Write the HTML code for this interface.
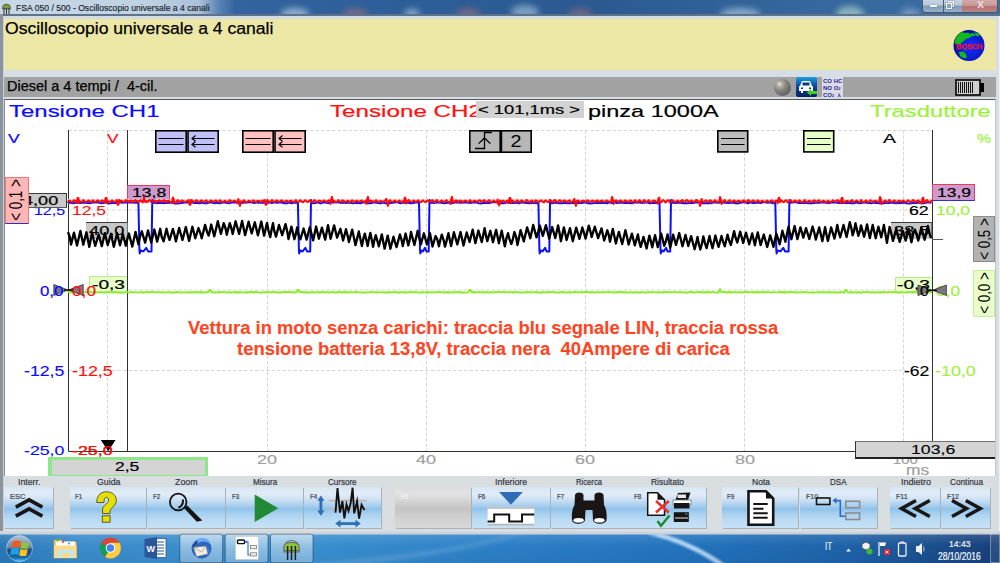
<!DOCTYPE html><html><head><meta charset="utf-8"><style>html,body{margin:0;padding:0;width:1000px;height:563px;overflow:hidden;background:#d6dde3;position:relative}div{box-sizing:border-box}</style></head><body>
<div style="position:absolute;left:0;top:0;width:1000px;height:15px;background:linear-gradient(90deg,#c9d8e6 0px,#bed0e2 150px,#a9c0d8 200px,#5a86b6 218px,#3464a0 235px,#2d5e98 400px,#2a5a90 600px,#35679c 800px,#3b6ea2 1000px)"></div>
<div style="position:absolute;left:281px;top:8px;width:28px;height:12px;border-radius:50%;background:rgba(220,235,250,.55);filter:blur(3px)"></div>
<div style="position:absolute;left:343px;top:8px;width:24px;height:12px;border-radius:50%;background:rgba(200,120,120,.45);filter:blur(3px)"></div>
<div style="position:absolute;left:404px;top:9px;width:16px;height:10px;border-radius:50%;background:rgba(220,235,250,.5);filter:blur(3px)"></div>
<div style="position:absolute;left:456px;top:8px;width:24px;height:12px;border-radius:50%;background:rgba(200,120,120,.45);filter:blur(3px)"></div>
<div style="position:absolute;left:511px;top:5px;width:28px;height:14px;border-radius:50%;background:rgba(220,235,250,.45);filter:blur(3px)"></div>
<div style="position:absolute;left:568px;top:8px;width:24px;height:12px;border-radius:50%;background:rgba(200,120,120,.4);filter:blur(3px)"></div>
<div style="position:absolute;left:720px;top:8px;width:40px;height:12px;border-radius:50%;background:rgba(220,235,250,.5);filter:blur(3px)"></div>
<div style="position:absolute;left:836px;top:6px;width:28px;height:16px;border-radius:50%;background:rgba(200,235,215,.55);filter:blur(3px)"></div>
<div style="position:absolute;left:900px;top:8px;width:20px;height:12px;border-radius:50%;background:rgba(170,190,230,.5);filter:blur(3px)"></div>
<svg style="position:absolute;left:1px;top:2px" width="11" height="12" viewBox="0 0 11 12"><path d="M1.5 6 A4 4 0 0 1 9.5 6 L9.5 7 L1.5 7Z" fill="#7a9a4a" stroke="#4a5a3a" stroke-width="0.8"/><path d="M3 6v6M5.5 6v6M8 6v6" stroke="#3a3a3a" stroke-width="1.1"/></svg>
<svg style="position:absolute;left:13.90px;top:0.96px;overflow:visible;" width="197.70" height="13.39"><text x="2" y="10.04" font-family="Liberation Sans" font-weight="normal" font-size="9.57" fill="#141c28" stroke="#141c28" stroke-width="0.15" textLength="193.70" lengthAdjust="spacingAndGlyphs" xml:space="preserve">FSA 050 / 500 - Oscilloscopio universale a 4 canali</text></svg>
<div style="position:absolute;left:922px;top:-1px;width:76px;height:14px;border:1px solid #4a5a6a;border-top:none;border-radius:0 0 4px 4px;overflow:hidden;background:linear-gradient(180deg,#c7d5e3 0,#b8c9da 45%,#7f9ab6 55%,#9ab1c8 100%)">
<div style="position:absolute;left:20px;top:0;width:1px;height:14px;background:#4a5a6a"></div>
<div style="position:absolute;left:39px;top:0;width:37px;height:14px;background:linear-gradient(180deg,#d4aaaa 0,#c89a9a 45%,#b47272 55%,#c08888 100%)"></div>
<div style="position:absolute;left:7px;top:6px;width:7px;height:2px;background:#f4f6f8;box-shadow:0 0 1px #334"></div>
<div style="position:absolute;left:25px;top:2px;width:6px;height:6px;border:1.2px solid #f0f2f4;box-shadow:0 0 1px #334"></div>
<div style="position:absolute;left:23px;top:4px;width:6px;height:6px;border:1.2px solid #f0f2f4;background:#8ca3ba;box-shadow:0 0 1px #334"></div>
<div style="position:absolute;left:39px;top:-2px;width:37px;text-align:center;font:bold 12px 'Liberation Sans';color:#eddada;line-height:14px">x</div>
</div>
<div style="position:absolute;left:0px;top:14px;width:1000px;height:2px;box-sizing:border-box;background:#5f7388"></div>
<div style="position:absolute;left:0px;top:16px;width:1000px;height:3px;box-sizing:border-box;background:#d3dce4"></div>
<div style="position:absolute;left:0px;top:14px;width:3px;height:519px;box-sizing:border-box;background:#8b949c"></div>
<div style="position:absolute;left:3px;top:16px;width:1px;height:517px;box-sizing:border-box;background:#c9d1d8"></div>
<div style="position:absolute;left:996px;top:16px;width:4px;height:517px;box-sizing:border-box;background:#d6dde3"></div>
<div style="position:absolute;left:999px;top:16px;width:1px;height:517px;box-sizing:border-box;background:#eef2f5"></div>
<div style="position:absolute;left:4px;top:19px;width:992px;height:51px;box-sizing:border-box;background:#ede7a6"></div>
<svg style="position:absolute;left:2.80px;top:17.16px;overflow:visible;" width="272.40" height="22.72"><text x="2" y="17.04" font-family="Liberation Sans" font-weight="normal" font-size="16.23" fill="#000" stroke="#000" stroke-width="0.25" textLength="268.40" lengthAdjust="spacingAndGlyphs" xml:space="preserve">Oscilloscopio universale a 4 canali</text></svg>
<svg style="position:absolute;left:953px;top:29px" width="32" height="33" viewBox="0 0 32 33">
<defs><radialGradient id="gl" cx="0.55" cy="0.55" r="0.6"><stop offset="0" stop-color="#1a30ff"/><stop offset="0.75" stop-color="#0818c8"/><stop offset="1" stop-color="#00085a"/></radialGradient></defs>
<circle cx="16" cy="16.5" r="15.5" fill="url(#gl)"/>
<path d="M1.5 14 C2 9 5 5 9 3 L12 4 L15 3.5 L17 5 L20 4 L23 5.5 L21 7 L18 7.5 L16 9 L13 10 L11 12 L9 13 L8 15 L4 16 Z" fill="#12b81e"/>
<path d="M22 3 L27 5.5 L25.5 7.5 L22.5 6.5 Z" fill="#12b81e"/>
<path d="M6 23 L10 22.5 L13 25 L14 28.5 L11 29.5 L7 27 Z" fill="#12b81e"/>
<path d="M11 20 L13 20.5 L12.5 22 Z" fill="#12b81e"/>
<text x="16.2" y="20.3" text-anchor="middle" font-family="Liberation Sans" font-weight="bold" font-size="8" fill="#e8142e" stroke="#e8142e" stroke-width="0.3" textLength="26" lengthAdjust="spacingAndGlyphs">BOSCH</text>
</svg>
<div style="position:absolute;left:4px;top:77px;width:992px;height:20px;box-sizing:border-box;background:#a2a2a2"></div>
<svg style="position:absolute;left:4.80px;top:74.72px;overflow:visible;" width="154.50" height="21.71"><text x="2" y="16.28" font-family="Liberation Sans" font-weight="normal" font-size="15.51" fill="#000" stroke="#000" stroke-width="0.25" textLength="150.50" lengthAdjust="spacingAndGlyphs" xml:space="preserve">Diesel a 4 tempi /  4-cil.</text></svg>
<div style="position:absolute;left:774px;top:79px;width:17px;height:17px;border-radius:50%;background:radial-gradient(circle at 33% 30%,#f2f0e2 0,#b4b2a6 14%,#86847e 40%,#5e5e62 78%,#4a4472 100%)"></div>
<svg style="position:absolute;left:796px;top:77px" width="21" height="20" viewBox="0 0 21 20">
<defs><linearGradient id="cg" x1="0" y1="0" x2="0" y2="1"><stop offset="0" stop-color="#1aa0e0"/><stop offset="0.45" stop-color="#0a4a9a"/><stop offset="1" stop-color="#061e60"/></linearGradient></defs>
<rect x="0" y="0" width="21" height="20" rx="2" fill="url(#cg)"/>
<path d="M4 9 L6 4 L14 4 L16 9 L17 9.5 L17 14 L15 14 L15 16 L13 16 L13 14 L7 14 L7 16 L5 16 L5 14 L3 14 L3 9.5Z" fill="#fff"/>
<rect x="6.5" y="5.5" width="7" height="3" fill="#0a3a8a"/>
<rect x="5" y="10.5" width="2" height="1.5" fill="#0a3a8a"/><rect x="13" y="10.5" width="2" height="1.5" fill="#0a3a8a"/>
<path d="M11 15.5 L15 12 L15 14 L21 14 L21 17 L15 17 L15 19Z" fill="#40d020"/>
</svg>
<div style="position:absolute;left:822px;top:77px;width:21px;height:20px;background:#dcdce6;font:bold 6px 'Liberation Sans';line-height:6.5px;color:#2a2a9a;padding:1px 0 0 1px;white-space:pre">CO HC<br>NO O<span style="font-size:4px">2</span><br>CO<span style="font-size:4px">2</span>  λ</div>
<svg style="position:absolute;left:955px;top:79px" width="31" height="17" viewBox="0 0 31 17">
<rect x="1" y="1" width="24" height="15" fill="#cfcfcf" stroke="#000" stroke-width="1.6"/>
<rect x="25" y="4" width="4" height="9" fill="#000"/>
<g stroke="#111" stroke-width="1"><path d="M3.5 3v11M5.5 3v11M7.5 3v11M9.5 3v11M11.5 3v11M13.5 3v11M15.5 3v11M17.5 3v11"/></g>
</svg>
<div style="position:absolute;left:4px;top:99px;width:992px;height:377.3px;box-sizing:border-box;background:#fff;border-top:1.6px solid #5a5a5a;border-left:1px solid #8a8a8a;border-right:1px solid #bfc6cc"></div>
<svg style="position:absolute;left:0;top:0" width="1000" height="563" viewBox="0 0 1000 563">
<line x1="107.5" y1="130" x2="107.5" y2="451" stroke="#d6d6d6" stroke-width="1" stroke-dasharray="3.5 2"/>
<line x1="267.5" y1="130" x2="267.5" y2="451" stroke="#d6d6d6" stroke-width="1" stroke-dasharray="3.5 2"/>
<line x1="426.5" y1="130" x2="426.5" y2="451" stroke="#d6d6d6" stroke-width="1" stroke-dasharray="3.5 2"/>
<line x1="585.5" y1="130" x2="585.5" y2="451" stroke="#d6d6d6" stroke-width="1" stroke-dasharray="3.5 2"/>
<line x1="744.5" y1="130" x2="744.5" y2="451" stroke="#d6d6d6" stroke-width="1" stroke-dasharray="3.5 2"/>
<line x1="903.5" y1="130" x2="903.5" y2="451" stroke="#d6d6d6" stroke-width="1" stroke-dasharray="3.5 2"/>
<line x1="68" y1="130.5" x2="932" y2="130.5" stroke="#d6d6d6" stroke-width="1" stroke-dasharray="3.5 2"/>
<line x1="68" y1="210" x2="932" y2="210" stroke="#d6d6d6" stroke-width="1" stroke-dasharray="3.5 2"/>
<line x1="68" y1="290" x2="932" y2="290" stroke="#d6d6d6" stroke-width="1" stroke-dasharray="3.5 2"/>
<line x1="68" y1="370.5" x2="932" y2="370.5" stroke="#d6d6d6" stroke-width="1" stroke-dasharray="3.5 2"/>
<path d="M68.5 130 V451.5 H932.5 V130" fill="none" stroke="#303030" stroke-width="1"/>
<line x1="127.5" y1="130" x2="127.5" y2="451.5" stroke="#303030" stroke-width="1"/>
</svg>
<svg style="position:absolute;left:7.00px;top:98.64px;overflow:visible;" width="154.50" height="24.35"><text x="2" y="18.26" font-family="Liberation Sans" font-weight="normal" font-size="17.39" fill="#0a0aff" stroke="#0a0aff" stroke-width="0.2" textLength="150.50" lengthAdjust="spacingAndGlyphs" xml:space="preserve">Tensione CH1</text></svg>
<svg style="position:absolute;left:328.00px;top:98.64px;overflow:visible;" width="156.00" height="24.35"><text x="2" y="18.26" font-family="Liberation Sans" font-weight="normal" font-size="17.39" fill="#ff1010" stroke="#ff1010" stroke-width="0.2" textLength="152.00" lengthAdjust="spacingAndGlyphs" xml:space="preserve">Tensione CH2</text></svg>
<svg style="position:absolute;left:586.30px;top:98.64px;overflow:visible;" width="134.70" height="24.35"><text x="2" y="18.26" font-family="Liberation Sans" font-weight="normal" font-size="17.39" fill="#000" stroke="#000" stroke-width="0.2" textLength="130.70" lengthAdjust="spacingAndGlyphs" xml:space="preserve">pinza 1000A</text></svg>
<svg style="position:absolute;left:867.60px;top:98.64px;overflow:visible;" width="124.80" height="24.35"><text x="2" y="18.26" font-family="Liberation Sans" font-weight="normal" font-size="17.39" fill="#9cf23c" stroke="#9cf23c" stroke-width="0.2" textLength="120.80" lengthAdjust="spacingAndGlyphs" xml:space="preserve">Trasduttore</text></svg>
<svg style="position:absolute;left:6.30px;top:128.65px;overflow:visible;" width="15.70" height="18.87"><text x="2" y="14.15" font-family="Liberation Sans" font-weight="normal" font-size="13.48" fill="#0a0aff" stroke="#0a0aff" stroke-width="0.2" textLength="11.70" lengthAdjust="spacingAndGlyphs" xml:space="preserve">V</text></svg>
<svg style="position:absolute;left:105.00px;top:128.65px;overflow:visible;" width="15.40" height="18.87"><text x="2" y="14.15" font-family="Liberation Sans" font-weight="normal" font-size="13.48" fill="#ff1010" stroke="#ff1010" stroke-width="0.2" textLength="11.40" lengthAdjust="spacingAndGlyphs" xml:space="preserve">V</text></svg>
<svg style="position:absolute;left:881.00px;top:128.65px;overflow:visible;" width="17.00" height="18.87"><text x="2" y="14.15" font-family="Liberation Sans" font-weight="normal" font-size="13.48" fill="#000" stroke="#000" stroke-width="0.2" textLength="13.00" lengthAdjust="spacingAndGlyphs" xml:space="preserve">A</text></svg>
<svg style="position:absolute;left:975.00px;top:128.65px;overflow:visible;" width="18.00" height="18.87"><text x="2" y="14.15" font-family="Liberation Sans" font-weight="normal" font-size="13.48" fill="#9cf23c" stroke="#9cf23c" stroke-width="0.2" textLength="14.00" lengthAdjust="spacingAndGlyphs" xml:space="preserve">%</text></svg>
<svg style="position:absolute;left:31.50px;top:200.95px;overflow:visible;" width="35.00" height="18.46"><text x="2" y="13.85" font-family="Liberation Sans" font-weight="normal" font-size="13.19" fill="#0a0aff" stroke="#0a0aff" stroke-width="0.12" textLength="31.00" lengthAdjust="spacingAndGlyphs" xml:space="preserve">12,5</text></svg>
<svg style="position:absolute;left:69.50px;top:200.95px;overflow:visible;" width="38.00" height="18.46"><text x="2" y="13.85" font-family="Liberation Sans" font-weight="normal" font-size="13.19" fill="#ff1010" stroke="#ff1010" stroke-width="0.12" textLength="34.00" lengthAdjust="spacingAndGlyphs" xml:space="preserve">12,5</text></svg>
<svg style="position:absolute;left:22.10px;top:360.89px;overflow:visible;" width="44.40" height="19.88"><text x="2" y="14.91" font-family="Liberation Sans" font-weight="normal" font-size="14.20" fill="#0a0aff" stroke="#0a0aff" stroke-width="0.12" textLength="40.40" lengthAdjust="spacingAndGlyphs" xml:space="preserve">-12,5</text></svg>
<svg style="position:absolute;left:69.50px;top:360.89px;overflow:visible;" width="44.80" height="19.88"><text x="2" y="14.91" font-family="Liberation Sans" font-weight="normal" font-size="14.20" fill="#ff1010" stroke="#ff1010" stroke-width="0.12" textLength="40.80" lengthAdjust="spacingAndGlyphs" xml:space="preserve">-12,5</text></svg>
<svg style="position:absolute;left:22.10px;top:441.00px;overflow:visible;" width="44.40" height="18.67"><text x="2" y="14.00" font-family="Liberation Sans" font-weight="normal" font-size="13.33" fill="#0a0aff" stroke="#0a0aff" stroke-width="0.12" textLength="40.40" lengthAdjust="spacingAndGlyphs" xml:space="preserve">-25,0</text></svg>
<svg style="position:absolute;left:69.50px;top:441.00px;overflow:visible;" width="44.60" height="18.67"><text x="2" y="14.00" font-family="Liberation Sans" font-weight="normal" font-size="13.33" fill="#ff1010" stroke="#ff1010" stroke-width="0.12" textLength="40.60" lengthAdjust="spacingAndGlyphs" xml:space="preserve">-25,0</text></svg>
<svg style="position:absolute;left:906.80px;top:201.10px;overflow:visible;" width="23.70" height="18.26"><text x="2" y="13.70" font-family="Liberation Sans" font-weight="normal" font-size="13.04" fill="#000" stroke="#000" stroke-width="0.2" textLength="19.70" lengthAdjust="spacingAndGlyphs" xml:space="preserve">62</text></svg>
<svg style="position:absolute;left:934.40px;top:201.10px;overflow:visible;" width="38.10" height="18.26"><text x="2" y="13.70" font-family="Liberation Sans" font-weight="normal" font-size="13.04" fill="#9cf23c" stroke="#9cf23c" stroke-width="0.2" textLength="34.10" lengthAdjust="spacingAndGlyphs" xml:space="preserve">10,0</text></svg>
<svg style="position:absolute;left:901.80px;top:360.89px;overflow:visible;" width="29.40" height="19.88"><text x="2" y="14.91" font-family="Liberation Sans" font-weight="normal" font-size="14.20" fill="#000" stroke="#000" stroke-width="0.12" textLength="25.40" lengthAdjust="spacingAndGlyphs" xml:space="preserve">-62</text></svg>
<svg style="position:absolute;left:933.20px;top:360.89px;overflow:visible;" width="44.80" height="19.88"><text x="2" y="14.91" font-family="Liberation Sans" font-weight="normal" font-size="14.20" fill="#9cf23c" stroke="#9cf23c" stroke-width="0.12" textLength="40.80" lengthAdjust="spacingAndGlyphs" xml:space="preserve">-10,0</text></svg>
<svg style="position:absolute;left:934.00px;top:280.79px;overflow:visible;" width="28.00" height="19.48"><text x="2" y="14.61" font-family="Liberation Sans" font-weight="normal" font-size="13.91" fill="#9cf23c" stroke="#9cf23c" stroke-width="0.2" textLength="24.00" lengthAdjust="spacingAndGlyphs" xml:space="preserve">0,0</text></svg>
<svg style="position:absolute;left:255.30px;top:449.70px;overflow:visible;" width="24.00" height="19.07"><text x="2" y="14.30" font-family="Liberation Sans" font-weight="normal" font-size="13.62" fill="#a0a0a0" stroke="#a0a0a0" stroke-width="0.2" textLength="20.00" lengthAdjust="spacingAndGlyphs" xml:space="preserve">20</text></svg>
<svg style="position:absolute;left:414.00px;top:449.70px;overflow:visible;" width="24.00" height="19.07"><text x="2" y="14.30" font-family="Liberation Sans" font-weight="normal" font-size="13.62" fill="#a0a0a0" stroke="#a0a0a0" stroke-width="0.2" textLength="20.00" lengthAdjust="spacingAndGlyphs" xml:space="preserve">40</text></svg>
<svg style="position:absolute;left:573.00px;top:449.70px;overflow:visible;" width="24.00" height="19.07"><text x="2" y="14.30" font-family="Liberation Sans" font-weight="normal" font-size="13.62" fill="#a0a0a0" stroke="#a0a0a0" stroke-width="0.2" textLength="20.00" lengthAdjust="spacingAndGlyphs" xml:space="preserve">60</text></svg>
<svg style="position:absolute;left:732.50px;top:449.70px;overflow:visible;" width="24.00" height="19.07"><text x="2" y="14.30" font-family="Liberation Sans" font-weight="normal" font-size="13.62" fill="#a0a0a0" stroke="#a0a0a0" stroke-width="0.2" textLength="20.00" lengthAdjust="spacingAndGlyphs" xml:space="preserve">80</text></svg>
<svg style="position:absolute;left:890.70px;top:449.70px;overflow:visible;" width="28.80" height="19.07"><text x="2" y="14.30" font-family="Liberation Sans" font-weight="normal" font-size="13.62" fill="#a0a0a0" stroke="#a0a0a0" stroke-width="0.2" textLength="24.80" lengthAdjust="spacingAndGlyphs" xml:space="preserve">100</text></svg>
<svg style="position:absolute;left:903.50px;top:459.59px;overflow:visible;" width="27.20" height="19.48"><text x="2" y="14.61" font-family="Liberation Sans" font-weight="normal" font-size="13.91" fill="#a0a0a0" stroke="#a0a0a0" stroke-width="0.2" textLength="23.20" lengthAdjust="spacingAndGlyphs" xml:space="preserve">ms</text></svg>
<div style="position:absolute;left:475.5px;top:101.3px;width:108.89999999999998px;height:16.900000000000006px;box-sizing:border-box;background:#d2d2d2"></div>
<svg style="position:absolute;left:476.00px;top:100.45px;overflow:visible;" width="106.00" height="18.46"><text x="2" y="13.85" font-family="Liberation Sans" font-weight="normal" font-size="13.19" fill="#000" stroke="#000" stroke-width="0.2" textLength="102.00" lengthAdjust="spacingAndGlyphs" xml:space="preserve">&lt; 101,1ms &gt;</text></svg>
<svg style="position:absolute;left:154.6px;top:130px" width="64" height="23" viewBox="0 0 64 23">
<rect x="0.8" y="0.8" width="30.4" height="21.4" fill="#c0c0f6" stroke="#000" stroke-width="1.6"/>
<rect x="33" y="0.8" width="30.2" height="21.4" fill="#c0c0f6" stroke="#000" stroke-width="1.6"/>
<path d="M3.5 8.5 H28.5 M3.5 14.5 H28.5" stroke="#000" stroke-width="1.15"/>
<path d="M37 8.5 H59.5 M37 14.5 H59.5 M40.5 5.5 L37 8.5 L40.5 11.3 M40.5 11.5 L37 14.5 L40.5 17.3" fill="none" stroke="#000" stroke-width="1.15"/>
</svg>
<svg style="position:absolute;left:241.6px;top:130px" width="64" height="23" viewBox="0 0 64 23">
<rect x="0.8" y="0.8" width="30.4" height="21.4" fill="#ffc0c0" stroke="#000" stroke-width="1.6"/>
<rect x="33" y="0.8" width="30.2" height="21.4" fill="#ffc0c0" stroke="#000" stroke-width="1.6"/>
<path d="M3.5 8.5 H28.5 M3.5 14.5 H28.5" stroke="#000" stroke-width="1.15"/>
<path d="M37 8.5 H59.5 M37 14.5 H59.5 M40.5 5.5 L37 8.5 L40.5 11.3 M40.5 11.5 L37 14.5 L40.5 17.3" fill="none" stroke="#000" stroke-width="1.15"/>
</svg>
<svg style="position:absolute;left:469px;top:130px" width="63" height="23" viewBox="0 0 63 23">
<rect x="0.8" y="0.8" width="30.4" height="21.4" fill="#b6b6b6" stroke="#000" stroke-width="1.6"/>
<rect x="32.4" y="0.8" width="29.8" height="21.4" fill="#b6b6b6" stroke="#000" stroke-width="1.6"/>
<path d="M6 18.5 H15.5 V2.5 H22.8" fill="none" stroke="#000" stroke-width="1.3"/>
<path d="M9.6 13.6 L15.5 8 L21.4 13.6" fill="none" stroke="#000" stroke-width="1.3"/>
<text x="47" y="16.8" text-anchor="middle" font-family="Liberation Sans" font-size="17.2" fill="#000" textLength="11" lengthAdjust="spacingAndGlyphs">2</text>
</svg>
<svg style="position:absolute;left:717px;top:130px" width="31.5" height="22.69999999999999"><rect x="0.8" y="0.8" width="29.9" height="21.099999999999987" fill="#bcbcbc" stroke="#000" stroke-width="1.6"/><path d="M4 8.5 H27.5 M4 14.5 H27.5" stroke="#000" stroke-width="1.15"/></svg>
<svg style="position:absolute;left:803px;top:130px" width="31.5" height="22.69999999999999"><rect x="0.8" y="0.8" width="29.9" height="21.099999999999987" fill="#e6ffc8" stroke="#000" stroke-width="1.6"/><path d="M4 8.5 H27.5 M4 14.5 H27.5" stroke="#000" stroke-width="1.15"/></svg>
<div style="position:absolute;left:4.9px;top:177.2px;width:23.799999999999997px;height:47.10000000000002px;box-sizing:border-box;background:#ffb6b6;border:1px solid #f07878;border-bottom:1.5px solid #3a2ab0"></div>
<svg style="position:absolute;left:-24.2px;top:160.4px;overflow:visible" width="80" height="80"><g transform="translate(40 40) rotate(-90)"><text x="0" y="6.30" text-anchor="middle" font-family="Liberation Sans" font-size="18.26" fill="#000" textLength="41.50" lengthAdjust="spacingAndGlyphs" xml:space="preserve">&lt; 0,1 &gt;</text></g></svg>
<div style="position:absolute;left:973.2px;top:215.8px;width:21.899999999999977px;height:46.39999999999998px;box-sizing:border-box;background:#b2b2b2;border:1px solid #8c8c8c"></div>
<svg style="position:absolute;left:944.3px;top:199px;overflow:visible" width="80" height="80"><g transform="translate(40 40) rotate(-90)"><text x="0" y="6.00" text-anchor="middle" font-family="Liberation Sans" font-size="17.39" fill="#000" textLength="41.50" lengthAdjust="spacingAndGlyphs" xml:space="preserve">&lt; 0,5 &gt;</text></g></svg>
<div style="position:absolute;left:973.2px;top:270.1px;width:21.899999999999977px;height:46.5px;box-sizing:border-box;background:#e8ffc8;border:1px solid #c6ee98"></div>
<svg style="position:absolute;left:944.3px;top:253.3px;overflow:visible" width="80" height="80"><g transform="translate(40 40) rotate(-90)"><text x="0" y="6.00" text-anchor="middle" font-family="Liberation Sans" font-size="17.39" fill="#000" textLength="41.50" lengthAdjust="spacingAndGlyphs" xml:space="preserve">&lt; 0,0 &gt;</text></g></svg>
<div style="position:absolute;left:28.2px;top:192.6px;width:38.39999999999999px;height:15.200000000000017px;box-sizing:border-box;background:#cacaca;border-top:1.3px solid #3a3a3a;border-right:1.3px solid #3a3a3a;border-bottom:1.3px solid #5a5a5a"></div>
<svg style="position:absolute;left:21.00px;top:191.87px;overflow:visible;" width="39.20" height="17.25"><text x="2" y="12.93" font-family="Liberation Sans" font-weight="normal" font-size="12.32" fill="#000" stroke="#000" stroke-width="0.2" textLength="35.20" lengthAdjust="spacingAndGlyphs" xml:space="preserve">4,00</text></svg>
<div style="position:absolute;left:4.9px;top:177.2px;width:23.799999999999997px;height:47.10000000000002px;box-sizing:border-box;background:#ffb6b6;border:1px solid #f07878;border-bottom:1.5px solid #3a2ab0"></div>
<svg style="position:absolute;left:-24.2px;top:160.4px;overflow:visible" width="80" height="80"><g transform="translate(40 40) rotate(-90)"><text x="0" y="6.30" text-anchor="middle" font-family="Liberation Sans" font-size="18.26" fill="#000" textLength="41.50" lengthAdjust="spacingAndGlyphs" xml:space="preserve">&lt; 0,1 &gt;</text></g></svg>
<div style="position:absolute;left:127.3px;top:184.7px;width:42.39999999999999px;height:16.100000000000023px;box-sizing:border-box;background:#cc9acc;border:1.2px solid #ee3a5a"></div>
<svg style="position:absolute;left:129.70px;top:183.35px;overflow:visible;" width="38.20" height="18.87"><text x="2" y="14.15" font-family="Liberation Sans" font-weight="normal" font-size="13.48" fill="#000" stroke="#000" stroke-width="0.2" textLength="34.20" lengthAdjust="spacingAndGlyphs" xml:space="preserve">13,8</text></svg>
<div style="position:absolute;left:932.2px;top:184.2px;width:42.59999999999991px;height:17.200000000000017px;box-sizing:border-box;background:#cc9acc;border:1.2px solid #ee3a5a;border-bottom:1.5px solid #3030d0"></div>
<svg style="position:absolute;left:934.50px;top:183.35px;overflow:visible;" width="38.00" height="18.87"><text x="2" y="14.15" font-family="Liberation Sans" font-weight="normal" font-size="13.48" fill="#000" stroke="#000" stroke-width="0.2" textLength="34.00" lengthAdjust="spacingAndGlyphs" xml:space="preserve">13,9</text></svg>
<div style="position:absolute;left:85.9px;top:222.3px;width:41.69999999999999px;height:17.19999999999999px;box-sizing:border-box;background:#c8c8c8;border-top:1.3px solid #3a3a3a;border-right:1px solid #777"></div>
<svg style="position:absolute;left:86.70px;top:221.66px;overflow:visible;" width="39.50" height="17.65"><text x="2" y="13.24" font-family="Liberation Sans" font-weight="normal" font-size="12.61" fill="#000" stroke="#000" stroke-width="0.2" textLength="35.50" lengthAdjust="spacingAndGlyphs" xml:space="preserve">40,0</text></svg>
<div style="position:absolute;left:890.7px;top:222.4px;width:41.5px;height:17.0px;box-sizing:border-box;background:#c8c8c8;border-top:1.3px solid #3a3a3a;border-right:1px solid #777"></div>
<svg style="position:absolute;left:891.50px;top:221.66px;overflow:visible;" width="39.50" height="17.65"><text x="2" y="13.24" font-family="Liberation Sans" font-weight="normal" font-size="12.61" fill="#000" stroke="#000" stroke-width="0.2" textLength="35.50" lengthAdjust="spacingAndGlyphs" xml:space="preserve">38,5</text></svg>
<div style="position:absolute;left:932px;top:238.8px;width:11px;height:1px;background:#555"></div>
<div style="position:absolute;left:89.4px;top:276.2px;width:38.0px;height:16.400000000000034px;box-sizing:border-box;background:#e8ffc8;border:1px solid #b8ec88;border-right:none"></div>
<svg style="position:absolute;left:89.50px;top:275.86px;overflow:visible;" width="37.00" height="17.65"><text x="2" y="13.24" font-family="Liberation Sans" font-weight="normal" font-size="12.61" fill="#000" stroke="#000" stroke-width="0.2" textLength="33.00" lengthAdjust="spacingAndGlyphs" xml:space="preserve">-0,3</text></svg>
<div style="position:absolute;left:894.5px;top:276.5px;width:37.700000000000045px;height:16.80000000000001px;box-sizing:border-box;background:#e8ffc8;border:1px solid #b8ec88;border-right:none"></div>
<svg style="position:absolute;left:894.50px;top:275.86px;overflow:visible;" width="37.00" height="17.65"><text x="2" y="13.24" font-family="Liberation Sans" font-weight="normal" font-size="12.61" fill="#000" stroke="#000" stroke-width="0.2" textLength="33.00" lengthAdjust="spacingAndGlyphs" xml:space="preserve">-0,3</text></svg>
<div style="position:absolute;left:48px;top:456.8px;width:159.5px;height:19.5px;box-sizing:border-box;background:#d4d4d4;border:3px solid #8ee88a;border-left:4.5px solid #8ee88a;border-right:3.5px solid #8ee88a;border-bottom:1.6px solid #8ee88a"></div>
<svg style="position:absolute;left:112.80px;top:458.21px;overflow:visible;" width="28.20" height="17.86"><text x="2" y="13.39" font-family="Liberation Sans" font-weight="normal" font-size="12.75" fill="#000" stroke="#000" stroke-width="0.2" textLength="24.20" lengthAdjust="spacingAndGlyphs" xml:space="preserve">2,5</text></svg>
<div style="position:absolute;left:855.2px;top:440.5px;width:140.29999999999995px;height:18.5px;box-sizing:border-box;background:#d4d4d4;border-left:1.5px solid #303030;border-top:1.2px solid #707070;border-bottom:2px solid #202020"></div>
<svg style="position:absolute;left:908.70px;top:440.30px;overflow:visible;" width="48.30" height="18.26"><text x="2" y="13.70" font-family="Liberation Sans" font-weight="normal" font-size="13.04" fill="#000" stroke="#000" stroke-width="0.1" textLength="44.30" lengthAdjust="spacingAndGlyphs" xml:space="preserve">103,6</text></svg>
<svg style="position:absolute;left:186.40px;top:315.52px;overflow:visible;" width="594.30" height="24.64"><text x="2" y="18.48" font-family="Liberation Sans" font-weight="bold" font-size="17.60" fill="#ff4422" stroke="#ff4422" stroke-width="0.1" textLength="590.30" lengthAdjust="spacingAndGlyphs" xml:space="preserve">Vettura in moto senza carichi: traccia blu segnale LIN, traccia rossa</text></svg>
<svg style="position:absolute;left:235.00px;top:337.12px;overflow:visible;" width="496.80" height="24.64"><text x="2" y="18.48" font-family="Liberation Sans" font-weight="bold" font-size="17.60" fill="#ff4422" stroke="#ff4422" stroke-width="0.1" textLength="492.80" lengthAdjust="spacingAndGlyphs" xml:space="preserve">tensione batteria 13,8V, traccia nera  40Ampere di carica</text></svg>
<svg style="position:absolute;left:0;top:0" width="1000" height="563" viewBox="0 0 1000 563">
<line x1="68" y1="199.3" x2="932" y2="199.3" stroke="#d4d4d4" stroke-width="1"/>
<path d="M68 202.8 L68.0 202.74 L70.5 202.87 L73.0 203.31 L75.5 202.76 L78.0 202.81 L80.5 202.90 L83.0 202.42 L85.5 202.81 L88.0 202.96 L90.5 203.15 L93.0 202.31 L95.5 202.56 L98.0 202.31 L100.5 203.17 L103.0 203.03 L105.5 202.25 L108.0 203.38 L110.5 203.36 L113.0 202.98 L115.5 202.94 L118.0 202.39 L120.5 202.22 L123.0 202.83 L125.5 202.27 L128.0 202.43 L130.5 202.49 L133.0 202.24 L135.5 202.76 L138.4 202.5 L139.4 249.7 L139.7 253.4 L140.8 250.5 L143.4 251.4 L146.3 247.9 L148.1 251.4 L151.5 251.4 L152.3 200 L153.3 202.8 L154.3 202.73 L156.8 203.21 L159.3 202.82 L161.8 202.97 L164.3 202.80 L166.8 202.99 L169.3 202.75 L171.8 202.53 L174.3 203.40 L176.8 203.39 L179.3 203.21 L181.8 203.05 L184.3 202.58 L186.8 202.48 L189.3 202.55 L191.8 202.28 L194.3 203.12 L196.8 202.68 L199.3 203.22 L201.8 202.66 L204.3 203.35 L206.8 203.22 L209.3 202.20 L211.8 202.45 L214.3 203.29 L216.8 202.76 L219.3 203.38 L221.8 202.68 L224.3 202.29 L226.8 202.96 L229.3 203.13 L231.8 202.52 L234.3 202.30 L236.8 202.60 L239.3 203.36 L241.8 203.11 L244.3 202.34 L246.8 202.50 L249.3 202.32 L251.8 202.27 L254.3 203.16 L256.8 202.41 L259.3 202.87 L261.8 202.74 L264.3 202.43 L266.8 203.08 L269.3 202.36 L271.8 202.97 L274.3 202.34 L276.8 202.70 L279.3 202.46 L281.8 202.52 L284.3 203.37 L286.8 203.16 L289.3 202.56 L291.8 203.26 L294.3 202.45 L296.8 202.67 L297.9 202.5 L298.9 249.7 L299.2 253.4 L300.3 250.5 L302.6 251.4 L305.4 247.9 L307.1 251.4 L310.2 251.4 L311.0 200 L312.0 202.8 L313.0 203.23 L315.5 202.97 L318.0 202.32 L320.5 203.39 L323.0 202.46 L325.5 202.51 L328.0 203.13 L330.5 202.59 L333.0 202.56 L335.5 202.29 L338.0 202.31 L340.5 202.90 L343.0 202.49 L345.5 202.92 L348.0 202.65 L350.5 202.74 L353.0 203.35 L355.5 202.78 L358.0 202.89 L360.5 203.24 L363.0 202.42 L365.5 202.38 L368.0 203.29 L370.5 203.18 L373.0 202.50 L375.5 202.43 L378.0 203.09 L380.5 203.33 L383.0 202.44 L385.5 203.34 L388.0 203.26 L390.5 202.92 L393.0 202.71 L395.5 202.32 L398.0 202.25 L400.5 203.36 L403.0 202.49 L405.5 203.05 L408.0 202.51 L410.5 203.19 L413.0 202.92 L415.5 202.55 L419.0 202.5 L420.0 249.7 L420.3 253.4 L421.4 250.5 L422.8 251.4 L425.0 247.9 L426.4 251.4 L428.7 251.4 L429.5 200 L430.5 202.8 L431.5 202.41 L434.0 203.06 L436.5 202.28 L439.0 202.47 L441.5 202.87 L444.0 203.22 L446.5 202.94 L449.0 202.54 L451.5 203.30 L454.0 202.44 L456.5 202.22 L459.0 202.52 L461.5 202.73 L464.0 202.27 L466.5 202.41 L469.0 202.64 L471.5 202.89 L474.0 202.36 L476.5 202.63 L479.0 203.27 L481.5 203.38 L484.0 202.99 L486.5 203.03 L489.0 202.90 L491.5 202.37 L494.0 202.24 L496.5 202.22 L499.0 203.29 L501.5 203.04 L504.0 203.36 L506.5 202.23 L509.0 202.96 L511.5 202.78 L514.0 203.08 L516.5 202.58 L519.0 203.40 L521.5 202.29 L524.0 202.86 L526.5 203.08 L529.0 203.28 L531.5 203.08 L534.0 203.04 L536.5 203.15 L538.4 202.5 L539.4 249.7 L539.7 253.4 L540.8 250.5 L542.6 251.4 L545.1 247.9 L546.6 251.4 L549.3 251.4 L550.1 200 L551.1 202.8 L552.1 203.30 L554.6 202.62 L557.1 203.02 L559.6 203.28 L562.1 203.25 L564.6 202.70 L567.1 203.15 L569.6 203.24 L572.1 202.89 L574.6 202.95 L577.1 202.66 L579.6 202.90 L582.1 202.93 L584.6 202.30 L587.1 202.97 L589.6 203.39 L592.1 203.26 L594.6 203.07 L597.1 202.67 L599.6 203.08 L602.1 202.90 L604.6 202.73 L607.1 203.21 L609.6 202.30 L612.1 203.10 L614.6 202.24 L617.1 202.92 L619.6 202.78 L622.1 202.48 L624.6 203.04 L627.1 202.80 L629.6 202.94 L632.1 203.30 L634.6 202.51 L637.1 202.21 L639.6 202.56 L642.1 203.01 L644.6 202.44 L647.1 202.40 L649.6 203.29 L652.1 202.99 L654.6 202.73 L657.1 203.27 L659.5 202.5 L660.5 249.7 L660.8 253.4 L661.9 250.5 L663.6 251.4 L666.1 247.9 L667.5 251.4 L670.2 251.4 L671.0 200 L672.0 202.8 L673.0 202.59 L675.5 203.00 L678.0 202.44 L680.5 202.72 L683.0 203.17 L685.5 203.30 L688.0 203.26 L690.5 202.66 L693.0 202.90 L695.5 202.58 L698.0 202.36 L700.5 202.80 L703.0 203.20 L705.5 203.22 L708.0 203.05 L710.5 203.34 L713.0 202.53 L715.5 202.40 L718.0 202.74 L720.5 202.53 L723.0 202.46 L725.5 202.70 L728.0 202.95 L730.5 202.79 L733.0 202.58 L735.5 203.21 L738.0 203.38 L740.5 202.74 L743.0 202.29 L745.5 202.24 L748.0 203.25 L750.5 202.25 L753.0 203.05 L755.5 202.88 L758.0 202.57 L760.5 203.15 L763.0 202.22 L765.5 202.36 L768.0 202.75 L770.5 202.23 L773.0 203.20 L775.3 202.5 L776.3 249.7 L776.6 253.4 L777.7 250.5 L780.4 251.4 L783.3 247.9 L785.2 251.4 L788.6 251.4 L789.4 200 L790.4 202.8 L791.4 202.48 L793.9 202.37 L796.4 202.26 L798.9 202.96 L801.4 202.74 L803.9 202.96 L806.4 202.99 L808.9 203.17 L811.4 203.35 L813.9 203.02 L816.4 202.44 L818.9 202.77 L821.4 202.41 L823.9 202.21 L826.4 202.77 L828.9 203.06 L831.4 202.41 L833.9 202.53 L836.4 202.61 L838.9 203.04 L841.4 202.82 L843.9 202.94 L846.4 203.11 L848.9 202.67 L851.4 203.15 L853.9 203.29 L856.4 202.30 L858.9 203.32 L861.4 203.07 L863.9 202.36 L866.4 202.74 L868.9 202.95 L871.4 203.29 L873.9 202.65 L876.4 202.88 L878.9 203.26 L881.4 203.16 L883.9 203.33 L886.4 202.76 L888.9 202.98 L891.4 202.45 L893.9 203.07 L896.4 203.18 L898.9 202.97 L901.4 203.06 L903.9 202.46 L906.4 203.28 L908.9 203.38 L911.4 203.37 L913.9 202.84 L916.4 203.15 L918.9 202.58 L921.4 203.29 L923.9 203.23 L926.4 202.62 L928.9 202.30 L931.4 202.73" fill="none" stroke="#0a10ff" stroke-width="2.0" stroke-linejoin="round"/>
<polyline points="68.0,232.04 69.7,236.71 71.0,244.60 74.0,232.65 77.0,245.54 80.4,230.97 83.3,244.71 86.4,232.30 89.3,246.90 92.1,232.42 93.7,239.82 95.2,245.79 98.7,234.45 101.8,246.16 104.8,233.14 107.7,245.06 111.0,233.78 113.8,246.84 115.3,240.82 117.1,233.24 120.0,245.30 122.8,234.25 125.8,245.69 127.2,239.61 128.9,233.57 132.3,246.62 135.5,231.88 138.4,244.18 139.9,237.10 141.8,231.26 145.1,242.62 148.0,230.46 151.2,242.43 154.3,229.54 155.5,234.04 157.1,241.64 158.5,236.23 160.2,228.78 161.6,236.56 163.6,241.38 166.5,228.74 168.2,235.89 169.6,240.00 172.9,228.94 174.6,235.39 175.9,241.41 179.1,227.90 182.5,240.01 185.8,227.03 189.1,240.88 192.4,226.81 195.3,238.27 198.5,228.02 200.2,232.79 201.7,238.27 205.1,224.85 206.9,231.42 208.6,235.62 209.8,231.12 211.2,224.53 214.3,236.35 217.8,221.25 220.9,233.85 223.7,223.26 225.5,228.26 226.8,234.77 228.4,228.32 229.8,223.18 231.1,227.13 232.7,233.96 235.6,221.30 239.1,233.90 242.1,220.91 245.1,235.15 248.6,221.75 251.7,233.38 253.2,228.00 254.8,222.28 257.9,235.35 261.3,221.55 264.1,235.66 265.7,228.67 267.0,222.84 268.5,230.70 270.3,237.10 271.5,229.96 273.0,223.13 274.2,230.65 276.0,236.67 279.0,224.98 282.2,235.23 285.5,224.12 287.2,231.26 288.5,239.03 291.4,226.63 294.4,239.21 295.8,234.13 297.1,227.52 298.6,234.94 300.4,239.32 303.6,228.54 306.6,239.64 309.8,227.27 313.2,240.38 316.1,226.55 318.9,238.71 321.9,227.60 325.2,239.66 328.0,225.21 330.6,238.79 334.1,225.36 337.1,237.67 340.4,228.79 343.1,240.56 346.0,229.19 347.7,236.10 348.9,242.06 352.2,229.62 355.5,245.14 358.8,231.49 361.9,246.07 363.5,238.05 364.8,233.59 367.7,245.97 368.8,239.54 370.4,232.86 373.1,246.84 374.2,241.06 375.7,235.18 377.1,239.90 378.9,246.33 381.8,234.33 384.6,248.68 387.7,235.60 390.4,248.76 393.5,236.69 394.7,241.39 396.6,247.07 399.9,234.49 401.5,239.57 402.8,246.10 405.6,233.53 408.3,245.39 409.8,239.21 411.0,231.93 414.4,244.96 417.7,230.79 419.4,238.63 421.0,244.28 422.2,239.47 423.9,233.31 426.9,244.46 429.9,233.06 432.5,246.52 435.6,236.04 437.4,239.82 438.9,246.31 440.3,240.00 441.8,234.68 443.7,240.48 445.0,246.64 446.5,241.13 448.4,233.22 451.1,246.09 452.3,239.93 453.9,232.25 457.3,244.39 460.5,232.02 462.0,238.55 463.5,245.50 466.7,232.48 469.6,241.99 472.7,229.64 475.4,243.15 478.4,230.54 481.8,242.11 484.6,228.27 486.0,235.61 487.3,241.17 490.3,230.77 493.0,242.21 494.8,234.87 496.1,229.83 498.9,243.29 501.7,230.74 503.0,237.31 504.8,246.39 506.5,238.10 508.0,233.24 509.4,238.90 511.3,244.01 512.8,239.49 514.4,232.05 516.1,236.99 517.5,244.96 520.6,230.11 523.8,241.39 527.1,227.35 530.3,238.20 533.2,225.01 536.5,237.36 538.2,231.79 539.7,225.35 542.8,235.85 544.2,231.17 545.9,225.22 549.2,238.49 552.2,227.02 555.3,238.11 558.1,225.51 559.4,232.20 560.9,241.20 563.9,227.37 566.6,239.99 570.0,228.18 572.8,241.20 576.2,227.60 579.5,238.80 582.3,227.48 584.2,233.59 585.6,238.58 588.8,225.65 590.3,231.09 591.6,237.04 594.8,226.73 598.1,238.13 601.5,228.39 604.2,240.50 605.8,235.64 607.3,230.26 608.8,235.06 610.0,241.71 612.8,228.93 615.9,243.47 617.4,236.96 618.9,231.91 622.2,244.02 625.4,230.25 627.1,237.30 628.6,244.58 631.9,233.61 634.8,245.33 637.9,234.50 639.0,240.66 640.7,246.88 643.5,236.92 646.6,248.46 647.8,242.50 649.4,235.61 652.3,247.32 653.5,241.36 655.1,235.19 657.8,247.15 659.5,240.76 661.2,233.67 664.2,245.73 665.8,241.52 667.6,234.41 670.2,247.50 671.7,241.13 673.1,234.68 674.8,240.48 676.0,244.89 677.5,239.45 679.2,233.05 682.5,246.28 685.5,235.01 688.3,246.03 691.1,236.11 694.6,249.23 696.2,243.15 697.5,236.89 698.9,244.25 700.3,249.43 702.0,243.40 703.3,236.37 704.8,242.52 706.6,248.15 709.5,235.94 710.7,241.39 712.5,248.19 715.4,235.55 717.2,242.55 718.6,246.90 721.5,235.97 723.0,241.29 724.8,246.28 727.5,234.65 729.3,241.24 730.9,244.97 734.1,231.07 735.6,237.68 737.3,242.54 740.2,231.63 743.2,242.98 744.5,237.90 746.0,232.68 749.2,244.29 752.2,233.50 754.9,245.27 756.0,239.62 757.8,232.38 760.6,245.09 763.8,234.53 767.2,246.99 770.2,235.31 773.5,246.84 776.3,233.65 777.8,238.03 779.7,244.34 782.4,230.73 785.4,241.76 788.5,226.70 791.4,239.20 794.6,226.02 797.4,239.15 799.0,232.93 800.4,227.39 801.8,231.97 803.3,237.66 806.0,228.08 809.3,238.95 810.8,233.40 812.6,226.53 814.4,233.06 815.8,239.57 819.2,227.43 822.4,241.15 825.1,227.14 826.6,235.30 827.9,240.95 831.1,227.42 834.5,238.60 835.8,232.44 837.3,224.92 838.7,232.14 840.2,237.27 843.5,224.94 846.6,237.05 849.8,222.27 851.5,228.78 852.6,235.27 854.1,230.77 855.5,223.20 858.3,235.75 859.9,231.06 861.0,225.34 864.1,236.79 867.1,224.40 869.8,238.13 872.7,225.02 875.7,238.21 876.8,233.26 878.4,226.74 881.3,237.36 883.9,224.93 886.9,242.90 889.6,227.01 891.4,233.92 893.0,240.93 896.3,228.76 897.7,234.95 899.7,241.82 902.8,230.91 905.7,240.55 908.6,228.87 911.5,242.25 913.1,233.98 914.9,229.70 916.4,233.77 918.3,240.57 921.3,227.70 924.6,239.81 927.9,225.88 929.5,233.26 930.9,237.90" fill="none" stroke="#000" stroke-width="2.35" stroke-linejoin="round"/>
<path d="M68 201.4 L68.0 201.64 L68.8 201.16 L69.6 200.74 L70.4 200.95 L71.2 202.02 L72.0 202.47 L72.8 201.65 L73.6 200.26 L74.4 200.67 L75.2 200.85 L76.0 202.39 L76.8 202.78 L77.6 198.03 L78.4 198.02 L79.2 202.77 L80.0 201.32 L80.8 201.85 L81.6 202.11 L82.4 201.16 L83.2 200.07 L84.0 200.55 L84.8 201.69 L85.6 201.92 L86.4 201.93 L87.2 201.57 L88.0 200.69 L88.8 200.54 L89.6 201.29 L90.4 202.09 L91.2 201.74 L92.0 201.87 L92.8 200.31 L93.6 200.87 L94.4 201.84 L95.2 201.96 L96.0 201.72 L96.8 200.90 L97.6 200.33 L98.4 200.67 L99.2 201.80 L100.0 201.99 L100.8 201.64 L101.6 200.52 L102.4 200.56 L103.2 201.08 L104.0 201.78 L104.8 202.78 L105.6 198.03 L106.4 198.02 L107.2 202.77 L108.0 201.16 L108.8 201.49 L109.6 202.47 L110.4 201.82 L111.2 201.16 L112.0 200.57 L112.8 200.67 L113.6 201.76 L114.4 202.10 L115.2 201.54 L116.0 201.13 L116.8 200.02 L117.6 204.77 L118.4 204.78 L119.2 200.03 L120.0 201.78 L120.8 200.82 L121.6 200.69 L122.4 201.45 L123.2 201.84 L124.0 202.06 L124.8 201.03 L125.6 200.17 L126.4 200.16 L127.2 201.36 L128.0 201.54 L128.8 202.11 L129.6 200.88 L130.4 200.60 L131.2 200.40 L132.0 200.95 L132.8 202.55 L133.6 201.38 L134.4 201.35 L135.2 200.14 L136.0 200.64 L136.8 201.17 L137.6 201.88 L138.4 202.16 L139.2 201.49 L140.0 200.45 L140.8 200.23 L141.6 201.57 L142.4 202.45 L143.2 201.65 L144.0 196.90 L144.8 201.65 L145.6 201.13 L146.4 201.93 L147.2 201.78 L148.0 201.73 L148.8 200.45 L149.6 200.02 L150.4 200.43 L151.2 202.17 L152.0 201.77 L152.8 201.44 L153.6 200.67 L154.4 200.38 L155.2 201.05 L156.0 202.43 L156.8 202.18 L157.6 201.17 L158.4 201.05 L159.2 200.29 L160.0 200.96 L160.8 201.77 L161.6 201.82 L162.4 200.86 L163.2 200.66 L164.0 200.20 L164.8 200.71 L165.6 201.87 L166.4 202.39 L167.2 201.03 L168.0 200.99 L168.8 200.48 L169.6 201.54 L170.4 202.00 L171.2 202.25 L172.0 202.21 L172.8 197.46 L173.6 198.59 L174.4 203.34 L175.2 202.24 L176.0 202.36 L176.8 201.11 L177.6 200.09 L178.4 201.21 L179.2 201.15 L180.0 202.43 L180.8 201.52 L181.6 200.51 L182.4 200.45 L183.2 201.10 L184.0 201.48 L184.8 202.26 L185.6 202.33 L186.4 201.21 L187.2 200.78 L188.0 200.73 L188.8 200.03 L189.6 204.78 L190.4 204.77 L191.2 200.02 L192.0 200.19 L192.8 201.25 L193.6 201.48 L194.4 201.99 L195.2 201.38 L196.0 200.31 L196.8 200.43 L197.6 200.92 L198.4 202.04 L199.2 202.10 L200.0 201.86 L200.8 200.48 L201.6 200.38 L202.4 200.96 L203.2 201.79 L204.0 201.91 L204.8 201.39 L205.6 200.82 L206.4 200.36 L207.2 201.47 L208.0 201.97 L208.8 202.53 L209.6 201.73 L210.4 200.55 L211.2 200.65 L212.0 200.67 L212.8 202.07 L213.6 201.93 L214.4 201.26 L215.2 200.73 L216.0 200.50 L216.8 201.30 L217.6 201.73 L218.4 201.45 L219.2 201.09 L220.0 200.32 L220.8 200.80 L221.6 201.91 L222.4 202.19 L223.2 201.87 L224.0 201.16 L224.8 200.81 L225.6 201.03 L226.4 202.03 L227.2 202.50 L228.0 201.58 L228.8 200.91 L229.6 200.27 L230.4 200.51 L231.2 201.26 L232.0 201.85 L232.8 201.65 L233.6 200.91 L234.4 200.70 L235.2 200.88 L236.0 202.07 L236.8 202.39 L237.6 201.83 L238.4 198.90 L239.2 203.65 L240.0 205.90 L240.8 201.15 L241.6 202.09 L242.4 201.79 L243.2 200.78 L244.0 200.19 L244.8 201.10 L245.6 202.26 L246.4 202.50 L247.2 201.91 L248.0 201.32 L248.8 200.70 L249.6 200.89 L250.4 201.30 L251.2 202.51 L252.0 201.55 L252.8 200.48 L253.6 200.42 L254.4 200.96 L255.2 201.96 L256.0 202.35 L256.8 201.39 L257.6 200.77 L258.4 200.93 L259.2 201.09 L260.0 201.87 L260.8 202.28 L261.6 201.18 L262.4 200.69 L263.2 200.49 L264.0 201.49 L264.8 200.03 L265.6 204.78 L266.4 204.77 L267.2 200.02 L268.0 200.76 L268.8 201.51 L269.6 202.24 L270.4 201.79 L271.2 201.16 L272.0 200.01 L272.8 200.72 L273.6 202.24 L274.4 202.05 L275.2 201.55 L276.0 200.53 L276.8 200.42 L277.6 200.83 L278.4 201.48 L279.2 201.88 L280.0 201.79 L280.8 201.07 L281.6 200.20 L282.4 200.84 L283.2 201.64 L284.0 201.85 L284.8 201.70 L285.6 201.05 L286.4 200.68 L287.2 200.70 L288.0 201.85 L288.8 202.13 L289.6 201.01 L290.4 201.09 L291.2 200.56 L292.0 201.03 L292.8 201.98 L293.6 201.93 L294.4 201.71 L295.2 200.46 L296.0 200.23 L296.8 201.11 L297.6 202.08 L298.4 201.96 L299.2 201.38 L300.0 200.28 L300.8 200.49 L301.6 201.86 L302.4 201.63 L303.2 202.26 L304.0 201.40 L304.8 200.40 L305.6 200.25 L306.4 201.44 L307.2 201.87 L308.0 202.02 L308.8 201.12 L309.6 200.47 L310.4 200.89 L311.2 201.90 L312.0 201.78 L312.8 201.98 L313.6 201.16 L314.4 200.15 L315.2 200.66 L316.0 201.67 L316.8 202.12 L317.6 202.04 L318.4 200.72 L319.2 200.84 L320.0 200.72 L320.8 201.27 L321.6 201.88 L322.4 201.33 L323.2 201.03 L324.0 200.45 L324.8 200.99 L325.6 201.16 L326.4 201.83 L327.2 201.94 L328.0 200.83 L328.8 200.29 L329.6 201.18 L330.4 203.90 L331.2 199.15 L332.0 196.90 L332.8 201.65 L333.6 200.87 L334.4 200.82 L335.2 202.00 L336.0 202.38 L336.8 201.76 L337.6 201.19 L338.4 200.09 L339.2 201.24 L340.0 202.06 L340.8 201.90 L341.6 201.07 L342.4 200.36 L343.2 200.65 L344.0 200.93 L344.8 202.07 L345.6 202.37 L346.4 201.40 L347.2 200.96 L348.0 200.72 L348.8 201.46 L349.6 202.20 L350.4 202.09 L351.2 200.77 L352.0 200.29 L352.8 200.87 L353.6 201.12 L354.4 202.33 L355.2 202.10 L356.0 200.87 L356.8 200.57 L357.6 201.18 L358.4 201.57 L359.2 201.94 L360.0 201.14 L360.8 200.81 L361.6 200.50 L362.4 201.47 L363.2 201.46 L364.0 201.88 L364.8 201.66 L365.6 200.76 L366.4 203.90 L367.2 199.15 L368.0 196.90 L368.8 201.65 L369.6 201.67 L370.4 200.59 L371.2 200.66 L372.0 200.87 L372.8 201.39 L373.6 202.43 L374.4 201.92 L375.2 200.68 L376.0 200.28 L376.8 200.63 L377.6 202.19 L378.4 201.82 L379.2 201.42 L380.0 201.11 L380.8 200.87 L381.6 201.29 L382.4 201.90 L383.2 201.75 L384.0 201.08 L384.8 200.76 L385.6 200.18 L386.4 198.90 L387.2 203.65 L388.0 205.90 L388.8 201.15 L389.6 200.38 L390.4 200.30 L391.2 201.73 L392.0 201.88 L392.8 202.11 L393.6 201.23 L394.4 200.73 L395.2 200.53 L396.0 201.91 L396.8 202.25 L397.6 201.87 L398.4 200.83 L399.2 200.58 L400.0 200.80 L400.8 201.88 L401.6 202.12 L402.4 202.07 L403.2 200.94 L404.0 202.21 L404.8 197.46 L405.6 198.59 L406.4 203.34 L407.2 201.50 L408.0 200.90 L408.8 200.04 L409.6 200.74 L410.4 201.38 L411.2 201.78 L412.0 201.75 L412.8 201.46 L413.6 200.49 L414.4 200.89 L415.2 201.82 L416.0 201.98 L416.8 201.27 L417.6 200.68 L418.4 200.37 L419.2 201.49 L420.0 201.80 L420.8 202.14 L421.6 201.75 L422.4 200.52 L423.2 200.53 L424.0 201.44 L424.8 201.89 L425.6 202.30 L426.4 201.05 L427.2 200.67 L428.0 200.61 L428.8 201.79 L429.6 202.09 L430.4 201.78 L431.2 201.07 L432.0 200.27 L432.8 200.28 L433.6 201.51 L434.4 202.10 L435.2 202.06 L436.0 200.53 L436.8 200.05 L437.6 200.92 L438.4 201.67 L439.2 202.35 L440.0 201.97 L440.8 200.81 L441.6 200.45 L442.4 201.10 L443.2 201.48 L444.0 202.32 L444.8 201.34 L445.6 200.94 L446.4 200.14 L447.2 201.18 L448.0 201.64 L448.8 202.11 L449.6 202.11 L450.4 203.90 L451.2 199.15 L452.0 196.90 L452.8 201.65 L453.6 202.34 L454.4 201.80 L455.2 200.70 L456.0 200.43 L456.8 200.51 L457.6 201.68 L458.4 202.50 L459.2 201.02 L460.0 200.64 L460.8 200.65 L461.6 201.07 L462.4 202.08 L463.2 202.44 L464.0 200.95 L464.8 200.68 L465.6 200.72 L466.4 200.89 L467.2 201.84 L468.0 202.04 L468.8 201.69 L469.6 200.51 L470.4 200.26 L471.2 201.53 L472.0 201.98 L472.8 202.23 L473.6 200.87 L474.4 200.74 L475.2 200.74 L476.0 201.46 L476.8 201.84 L477.6 201.53 L478.4 200.67 L479.2 200.44 L480.0 200.33 L480.8 200.94 L481.6 202.27 L482.4 201.35 L483.2 201.06 L484.0 200.14 L484.8 200.68 L485.6 201.58 L486.4 202.01 L487.2 201.73 L488.0 200.91 L488.8 200.26 L489.6 200.33 L490.4 201.55 L491.2 202.38 L492.0 201.84 L492.8 201.36 L493.6 200.52 L494.4 201.12 L495.2 201.69 L496.0 202.20 L496.8 201.76 L497.6 199.46 L498.4 204.21 L499.2 205.34 L500.0 200.59 L500.8 202.00 L501.6 202.15 L502.4 200.67 L503.2 200.66 L504.0 200.91 L504.8 202.26 L505.6 202.29 L506.4 200.88 L507.2 201.19 L508.0 200.47 L508.8 202.77 L509.6 198.02 L510.4 198.03 L511.2 202.78 L512.0 200.75 L512.8 200.45 L513.6 201.58 L514.4 202.23 L515.2 201.79 L516.0 201.66 L516.8 200.22 L517.6 200.55 L518.4 201.26 L519.2 201.77 L520.0 202.28 L520.8 201.12 L521.6 200.28 L522.4 200.96 L523.2 201.20 L524.0 202.31 L524.8 202.03 L525.6 201.12 L526.4 200.11 L527.2 200.13 L528.0 201.23 L528.8 202.03 L529.6 202.30 L530.4 201.38 L531.2 200.75 L532.0 200.54 L532.8 201.81 L533.6 202.32 L534.4 202.01 L535.2 200.37 L536.0 200.77 L536.8 200.62 L537.6 201.27 L538.4 202.46 L539.2 201.94 L540.0 200.79 L540.8 200.57 L541.6 200.56 L542.4 201.73 L543.2 201.83 L544.0 202.36 L544.8 200.68 L545.6 200.49 L546.4 201.13 L547.2 201.91 L548.0 202.14 L548.8 201.50 L549.6 200.19 L550.4 200.22 L551.2 200.83 L552.0 202.24 L552.8 202.25 L553.6 200.87 L554.4 200.16 L555.2 200.03 L556.0 201.13 L556.8 201.65 L557.6 202.48 L558.4 201.56 L559.2 200.50 L560.0 200.20 L560.8 200.75 L561.6 201.89 L562.4 202.20 L563.2 201.05 L564.0 200.46 L564.8 200.51 L565.6 201.12 L566.4 201.88 L567.2 202.49 L568.0 200.95 L568.8 200.78 L569.6 200.38 L570.4 201.61 L571.2 202.53 L572.0 201.97 L572.8 201.39 L573.6 200.56 L574.4 198.90 L575.2 203.65 L576.0 205.90 L576.8 201.15 L577.6 200.54 L578.4 200.77 L579.2 201.21 L580.0 202.40 L580.8 202.27 L581.6 201.06 L582.4 200.95 L583.2 200.67 L584.0 200.71 L584.8 201.51 L585.6 201.93 L586.4 201.97 L587.2 200.28 L588.0 200.56 L588.8 201.04 L589.6 201.72 L590.4 201.80 L591.2 201.53 L592.0 200.60 L592.8 200.77 L593.6 200.93 L594.4 201.78 L595.2 202.34 L596.0 200.99 L596.8 200.62 L597.6 200.61 L598.4 201.33 L599.2 202.05 L600.0 201.60 L600.8 200.96 L601.6 200.75 L602.4 200.60 L603.2 201.52 L604.0 201.85 L604.8 201.81 L605.6 201.53 L606.4 200.46 L607.2 200.71 L608.0 201.19 L608.8 201.68 L609.6 201.91 L610.4 201.54 L611.2 201.65 L612.0 196.90 L612.8 199.15 L613.6 203.90 L614.4 201.95 L615.2 200.88 L616.0 200.27 L616.8 201.04 L617.6 201.21 L618.4 202.00 L619.2 201.77 L620.0 200.57 L620.8 200.57 L621.6 201.34 L622.4 201.76 L623.2 202.20 L624.0 201.41 L624.8 200.55 L625.6 200.39 L626.4 201.19 L627.2 201.35 L628.0 202.30 L628.8 201.64 L629.6 200.88 L630.4 200.43 L631.2 200.72 L632.0 201.88 L632.8 202.48 L633.6 201.28 L634.4 201.25 L635.2 200.17 L636.0 201.02 L636.8 202.02 L637.6 202.54 L638.4 201.31 L639.2 200.16 L640.0 200.52 L640.8 201.49 L641.6 201.92 L642.4 202.28 L643.2 201.22 L644.0 200.18 L644.8 200.24 L645.6 202.03 L646.4 201.99 L647.2 202.26 L648.0 200.62 L648.8 200.20 L649.6 200.96 L650.4 201.52 L651.2 202.00 L652.0 202.34 L652.8 200.79 L653.6 200.63 L654.4 200.76 L655.2 200.85 L656.0 202.31 L656.8 202.05 L657.6 203.34 L658.4 198.59 L659.2 197.46 L660.0 202.21 L660.8 202.42 L661.6 202.07 L662.4 200.53 L663.2 200.30 L664.0 200.62 L664.8 201.70 L665.6 202.46 L666.4 201.65 L667.2 200.52 L668.0 200.21 L668.8 200.43 L669.6 202.33 L670.4 202.10 L671.2 201.66 L672.0 200.98 L672.8 200.24 L673.6 200.99 L674.4 201.98 L675.2 201.95 L676.0 201.68 L676.8 201.02 L677.6 200.53 L678.4 201.21 L679.2 201.44 L680.0 202.43 L680.8 200.99 L681.6 200.71 L682.4 200.04 L683.2 201.00 L684.0 202.08 L684.8 202.18 L685.6 201.00 L686.4 200.10 L687.2 200.21 L688.0 200.86 L688.8 202.28 L689.6 202.35 L690.4 201.07 L691.2 200.42 L692.0 200.87 L692.8 201.11 L693.6 202.11 L694.4 202.02 L695.2 201.32 L696.0 200.07 L696.8 200.10 L697.6 201.56 L698.4 202.05 L699.2 201.15 L700.0 205.90 L700.8 203.65 L701.6 198.90 L702.4 201.31 L703.2 201.83 L704.0 202.22 L704.8 201.01 L705.6 200.43 L706.4 200.56 L707.2 201.63 L708.0 201.82 L708.8 202.01 L709.6 200.40 L710.4 200.78 L711.2 200.51 L712.0 202.39 L712.8 202.38 L713.6 201.76 L714.4 200.70 L715.2 200.20 L716.0 201.65 L716.8 201.56 L717.6 201.99 L718.4 201.63 L719.2 201.65 L720.0 196.90 L720.8 199.15 L721.6 203.90 L722.4 202.25 L723.2 201.41 L724.0 200.57 L724.8 200.07 L725.6 201.46 L726.4 201.78 L727.2 202.07 L728.0 201.25 L728.8 200.78 L729.6 200.20 L730.4 200.54 L731.2 201.95 L732.0 202.19 L732.8 201.39 L733.6 200.80 L734.4 200.54 L735.2 201.22 L736.0 202.35 L736.8 202.37 L737.6 200.90 L738.4 200.76 L739.2 200.86 L740.0 201.46 L740.8 201.84 L741.6 202.25 L742.4 200.68 L743.2 200.70 L744.0 200.34 L744.8 201.23 L745.6 202.52 L746.4 202.06 L747.2 201.14 L748.0 200.28 L748.8 200.25 L749.6 201.22 L750.4 202.12 L751.2 201.57 L752.0 201.43 L752.8 200.41 L753.6 200.58 L754.4 201.23 L755.2 201.88 L756.0 202.00 L756.8 201.48 L757.6 200.36 L758.4 200.60 L759.2 201.77 L760.0 202.17 L760.8 201.93 L761.6 200.93 L762.4 200.85 L763.2 201.39 L764.0 201.94 L764.8 202.16 L765.6 201.50 L766.4 201.15 L767.2 200.57 L768.0 201.16 L768.8 201.90 L769.6 201.62 L770.4 201.05 L771.2 200.45 L772.0 200.46 L772.8 201.21 L773.6 202.10 L774.4 202.08 L775.2 201.15 L776.0 200.62 L776.8 200.76 L777.6 203.34 L778.4 198.59 L779.2 197.46 L780.0 202.21 L780.8 200.30 L781.6 200.41 L782.4 201.25 L783.2 202.10 L784.0 202.25 L784.8 201.06 L785.6 200.19 L786.4 200.50 L787.2 201.78 L788.0 202.54 L788.8 201.61 L789.6 201.11 L790.4 200.68 L791.2 200.29 L792.0 201.68 L792.8 201.97 L793.6 202.42 L794.4 200.74 L795.2 200.60 L796.0 201.08 L796.8 201.60 L797.6 202.04 L798.4 201.31 L799.2 200.28 L800.0 200.78 L800.8 201.68 L801.6 202.34 L802.4 202.15 L803.2 202.12 L804.0 200.79 L804.8 200.08 L805.6 201.24 L806.4 202.52 L807.2 202.32 L808.0 201.52 L808.8 200.83 L809.6 200.72 L810.4 201.59 L811.2 201.74 L812.0 202.29 L812.8 201.05 L813.6 200.82 L814.4 200.20 L815.2 200.94 L816.0 202.47 L816.8 201.62 L817.6 201.06 L818.4 200.52 L819.2 200.35 L820.0 201.11 L820.8 202.01 L821.6 201.90 L822.4 201.35 L823.2 200.65 L824.0 200.92 L824.8 201.12 L825.6 202.47 L826.4 201.78 L827.2 201.80 L828.0 200.80 L828.8 201.02 L829.6 202.17 L830.4 202.49 L831.2 201.57 L832.0 201.02 L832.8 200.37 L833.6 200.76 L834.4 201.15 L835.2 201.88 L836.0 201.67 L836.8 200.55 L837.6 200.24 L838.4 200.64 L839.2 201.18 L840.0 201.96 L840.8 202.78 L841.6 198.03 L842.4 198.02 L843.2 202.77 L844.0 202.17 L844.8 202.47 L845.6 201.06 L846.4 201.20 L847.2 200.92 L848.0 201.00 L848.8 202.06 L849.6 201.85 L850.4 201.11 L851.2 201.19 L852.0 200.07 L852.8 201.09 L853.6 201.65 L854.4 201.95 L855.2 201.59 L856.0 200.72 L856.8 200.51 L857.6 201.20 L858.4 201.75 L859.2 202.56 L860.0 201.81 L860.8 200.11 L861.6 200.35 L862.4 201.93 L863.2 202.06 L864.0 202.35 L864.8 201.64 L865.6 200.54 L866.4 200.61 L867.2 201.48 L868.0 202.26 L868.8 202.04 L869.6 201.13 L870.4 200.28 L871.2 200.75 L872.0 200.87 L872.8 202.38 L873.6 201.59 L874.4 201.12 L875.2 200.66 L876.0 201.19 L876.8 201.26 L877.6 201.85 L878.4 202.09 L879.2 201.65 L880.0 196.90 L880.8 199.15 L881.6 203.90 L882.4 202.49 L883.2 202.19 L884.0 201.18 L884.8 200.65 L885.6 200.45 L886.4 202.43 L887.2 202.10 L888.0 201.86 L888.8 200.15 L889.6 200.03 L890.4 201.24 L891.2 201.47 L892.0 202.15 L892.8 201.56 L893.6 200.98 L894.4 200.36 L895.2 201.20 L896.0 201.93 L896.8 202.41 L897.6 201.88 L898.4 200.74 L899.2 200.87 L900.0 200.74 L900.8 201.86 L901.6 201.75 L902.4 201.09 L903.2 200.50 L904.0 201.07 L904.8 201.57 L905.6 201.94 L906.4 202.27 L907.2 201.09 L908.0 200.33 L908.8 200.86 L909.6 201.10 L910.4 201.89 L911.2 202.22 L912.0 201.23 L912.8 200.11 L913.6 200.26 L914.4 201.15 L915.2 202.34 L916.0 201.67 L916.8 200.97 L917.6 200.65 L918.4 200.43 L919.2 201.45 L920.0 202.58 L920.8 201.91 L921.6 203.34 L922.4 198.59 L923.2 197.46 L924.0 202.21 L924.8 202.55 L925.6 201.45 L926.4 200.43 L927.2 200.06 L928.0 201.09 L928.8 202.26 L929.6 202.15 L930.4 202.20 L931.2 200.62 L932.0 200.38" fill="none" stroke="#ff0a0a" stroke-width="2.0" stroke-linejoin="round"/>
<path d="M68 292.3 L68.0 291.95 L68.8 292.00 L69.6 291.96 L70.4 292.24 L71.2 292.01 L72.0 292.56 L72.8 292.39 L73.6 292.59 L74.4 292.34 L75.2 292.03 L76.0 292.12 L76.8 292.57 L77.6 292.37 L78.4 292.42 L79.2 292.41 L80.0 291.94 L80.8 292.06 L81.6 292.25 L82.4 292.58 L83.2 292.65 L84.0 292.37 L84.8 292.11 L85.6 291.94 L86.4 292.35 L87.2 292.23 L88.0 292.64 L88.8 292.07 L89.6 292.06 L90.4 291.91 L91.2 291.92 L92.0 292.55 L92.8 292.60 L93.6 292.02 L94.4 291.91 L95.2 292.36 L96.0 292.10 L96.8 292.39 L97.6 292.63 L98.4 292.50 L99.2 292.12 L100.0 292.39 L100.8 292.13 L101.6 292.51 L102.4 292.11 L103.2 292.60 L104.0 292.44 L104.8 292.61 L105.6 292.18 L106.4 292.66 L107.2 292.37 L108.0 292.11 L108.8 292.42 L109.6 292.15 L110.4 291.99 L111.2 291.93 L112.0 292.39 L112.8 292.09 L113.6 291.98 L114.4 292.52 L115.2 292.01 L116.0 292.50 L116.8 292.12 L117.6 292.19 L118.4 292.65 L119.2 292.56 L120.0 292.57 L120.8 292.68 L121.6 292.38 L122.4 292.65 L123.2 292.40 L124.0 292.37 L124.8 292.16 L125.6 292.20 L126.4 292.36 L127.2 292.10 L128.0 292.41 L128.8 292.59 L129.6 292.48 L130.4 292.08 L131.2 291.92 L132.0 292.19 L132.8 292.25 L133.6 292.58 L134.4 292.34 L135.2 292.31 L136.0 292.38 L136.8 292.34 L137.6 292.44 L138.4 292.35 L139.2 292.34 L140.0 292.09 L140.8 292.00 L141.6 292.25 L142.4 292.61 L143.2 292.66 L144.0 292.13 L144.8 292.36 L145.6 292.31 L146.4 292.26 L147.2 292.04 L148.0 292.53 L148.8 291.97 L149.6 292.08 L150.4 292.12 L151.2 292.06 L152.0 292.05 L152.8 291.96 L153.6 292.32 L154.4 292.04 L155.2 292.41 L156.0 292.38 L156.8 292.40 L157.6 292.28 L158.4 292.39 L159.2 292.14 L160.0 292.27 L160.8 292.45 L161.6 292.07 L162.4 292.49 L163.2 292.37 L164.0 292.68 L164.8 292.39 L165.6 292.34 L166.4 292.51 L167.2 292.13 L168.0 292.20 L168.8 292.25 L169.6 292.49 L170.4 292.48 L171.2 292.05 L172.0 292.66 L172.8 292.69 L173.6 292.30 L174.4 292.70 L175.2 292.40 L176.0 292.21 L176.8 291.97 L177.6 291.91 L178.4 292.37 L179.2 292.47 L180.0 292.39 L180.8 292.53 L181.6 292.25 L182.4 292.49 L183.2 292.38 L184.0 292.41 L184.8 292.34 L185.6 292.43 L186.4 292.35 L187.2 291.97 L188.0 292.44 L188.8 292.46 L189.6 292.24 L190.4 292.68 L191.2 292.28 L192.0 292.03 L192.8 292.31 L193.6 292.19 L194.4 292.03 L195.2 292.61 L196.0 292.04 L196.8 292.47 L197.6 292.04 L198.4 292.31 L199.2 292.70 L200.0 291.97 L200.8 292.59 L201.6 291.90 L202.4 292.68 L203.2 292.63 L204.0 292.26 L204.8 292.41 L205.6 292.27 L206.4 292.03 L207.2 292.18 L208.0 292.25 L208.8 291.55 L209.6 290.05 L210.4 290.05 L211.2 291.55 L212.0 292.34 L212.8 292.53 L213.6 292.38 L214.4 292.16 L215.2 292.66 L216.0 292.38 L216.8 292.12 L217.6 292.34 L218.4 292.59 L219.2 291.94 L220.0 292.42 L220.8 292.29 L221.6 292.13 L222.4 292.03 L223.2 292.09 L224.0 292.25 L224.8 292.24 L225.6 292.38 L226.4 292.12 L227.2 292.40 L228.0 292.28 L228.8 292.54 L229.6 292.54 L230.4 292.09 L231.2 292.68 L232.0 292.34 L232.8 292.17 L233.6 292.10 L234.4 292.47 L235.2 292.25 L236.0 292.45 L236.8 292.10 L237.6 292.59 L238.4 292.11 L239.2 292.60 L240.0 292.25 L240.8 292.22 L241.6 292.36 L242.4 292.32 L243.2 292.34 L244.0 292.35 L244.8 292.66 L245.6 292.49 L246.4 291.97 L247.2 292.69 L248.0 291.91 L248.8 291.94 L249.6 292.55 L250.4 292.12 L251.2 291.92 L252.0 292.04 L252.8 292.30 L253.6 292.57 L254.4 291.92 L255.2 292.03 L256.0 291.91 L256.8 291.94 L257.6 292.15 L258.4 292.29 L259.2 292.67 L260.0 292.42 L260.8 292.58 L261.6 292.37 L262.4 292.63 L263.2 292.44 L264.0 292.09 L264.8 292.20 L265.6 292.28 L266.4 291.99 L267.2 292.64 L268.0 292.29 L268.8 292.06 L269.6 292.29 L270.4 292.54 L271.2 292.12 L272.0 292.37 L272.8 291.97 L273.6 292.09 L274.4 292.05 L275.2 292.30 L276.0 292.45 L276.8 292.08 L277.6 292.45 L278.4 292.37 L279.2 292.50 L280.0 292.70 L280.8 292.17 L281.6 292.70 L282.4 292.26 L283.2 292.31 L284.0 292.04 L284.8 291.97 L285.6 292.42 L286.4 291.98 L287.2 291.93 L288.0 291.97 L288.8 292.33 L289.6 292.06 L290.4 292.11 L291.2 292.51 L292.0 292.26 L292.8 292.02 L293.6 292.44 L294.4 292.70 L295.2 292.40 L296.0 292.26 L296.8 291.55 L297.6 290.05 L298.4 290.05 L299.2 291.55 L300.0 292.10 L300.8 292.52 L301.6 291.98 L302.4 292.00 L303.2 292.31 L304.0 292.05 L304.8 292.35 L305.6 292.13 L306.4 292.65 L307.2 292.25 L308.0 292.55 L308.8 292.66 L309.6 292.26 L310.4 292.51 L311.2 292.29 L312.0 292.22 L312.8 292.00 L313.6 292.43 L314.4 292.64 L315.2 292.45 L316.0 292.15 L316.8 292.32 L317.6 292.19 L318.4 292.21 L319.2 292.52 L320.0 291.91 L320.8 292.29 L321.6 292.31 L322.4 292.02 L323.2 292.49 L324.0 292.10 L324.8 292.22 L325.6 292.10 L326.4 292.38 L327.2 292.24 L328.0 292.45 L328.8 292.24 L329.6 292.53 L330.4 292.34 L331.2 291.98 L332.0 292.29 L332.8 292.10 L333.6 292.14 L334.4 292.66 L335.2 292.28 L336.0 292.49 L336.8 292.02 L337.6 292.40 L338.4 291.99 L339.2 292.08 L340.0 292.00 L340.8 291.92 L341.6 292.63 L342.4 292.67 L343.2 292.19 L344.0 291.91 L344.8 292.49 L345.6 292.43 L346.4 291.94 L347.2 292.51 L348.0 291.95 L348.8 292.09 L349.6 292.52 L350.4 292.51 L351.2 292.09 L352.0 292.31 L352.8 292.54 L353.6 292.38 L354.4 292.32 L355.2 292.05 L356.0 291.95 L356.8 292.05 L357.6 292.32 L358.4 292.38 L359.2 292.27 L360.0 292.41 L360.8 292.35 L361.6 292.42 L362.4 292.23 L363.2 292.57 L364.0 292.33 L364.8 292.60 L365.6 292.69 L366.4 292.56 L367.2 292.52 L368.0 292.45 L368.8 292.34 L369.6 292.10 L370.4 291.98 L371.2 292.43 L372.0 292.10 L372.8 292.39 L373.6 292.34 L374.4 292.39 L375.2 292.24 L376.0 292.09 L376.8 292.14 L377.6 292.46 L378.4 292.61 L379.2 292.16 L380.0 292.15 L380.8 292.26 L381.6 292.24 L382.4 292.41 L383.2 292.50 L384.0 292.51 L384.8 292.55 L385.6 292.48 L386.4 292.68 L387.2 292.26 L388.0 292.26 L388.8 292.42 L389.6 292.15 L390.4 292.56 L391.2 292.23 L392.0 292.35 L392.8 292.32 L393.6 292.19 L394.4 291.91 L395.2 292.12 L396.0 292.28 L396.8 292.66 L397.6 292.01 L398.4 292.62 L399.2 292.68 L400.0 292.53 L400.8 292.12 L401.6 291.92 L402.4 292.60 L403.2 291.95 L404.0 292.14 L404.8 292.65 L405.6 292.44 L406.4 292.56 L407.2 292.57 L408.0 292.04 L408.8 292.30 L409.6 291.98 L410.4 292.20 L411.2 292.30 L412.0 292.55 L412.8 292.13 L413.6 292.43 L414.4 292.01 L415.2 292.11 L416.0 291.95 L416.8 292.36 L417.6 292.37 L418.4 292.47 L419.2 292.24 L420.0 292.65 L420.8 292.48 L421.6 292.35 L422.4 292.60 L423.2 292.04 L424.0 292.13 L424.8 292.34 L425.6 292.38 L426.4 292.66 L427.2 292.44 L428.0 291.94 L428.8 292.66 L429.6 292.27 L430.4 292.06 L431.2 292.51 L432.0 292.40 L432.8 292.58 L433.6 292.34 L434.4 292.10 L435.2 292.28 L436.0 292.27 L436.8 292.18 L437.6 292.36 L438.4 292.02 L439.2 292.10 L440.0 291.99 L440.8 291.92 L441.6 292.32 L442.4 292.49 L443.2 292.22 L444.0 292.62 L444.8 292.39 L445.6 292.43 L446.4 292.13 L447.2 292.62 L448.0 292.18 L448.8 292.58 L449.6 292.10 L450.4 292.66 L451.2 292.45 L452.0 292.04 L452.8 292.49 L453.6 292.02 L454.4 292.21 L455.2 292.20 L456.0 292.17 L456.8 292.19 L457.6 292.03 L458.4 292.22 L459.2 291.97 L460.0 292.54 L460.8 292.18 L461.6 292.47 L462.4 292.24 L463.2 292.68 L464.0 292.60 L464.8 292.46 L465.6 292.57 L466.4 292.63 L467.2 292.64 L468.0 292.23 L468.8 291.55 L469.6 290.05 L470.4 290.05 L471.2 291.55 L472.0 292.40 L472.8 291.91 L473.6 292.50 L474.4 291.96 L475.2 292.24 L476.0 292.29 L476.8 292.57 L477.6 292.41 L478.4 292.02 L479.2 292.43 L480.0 292.09 L480.8 292.39 L481.6 292.23 L482.4 292.66 L483.2 292.26 L484.0 292.12 L484.8 292.15 L485.6 292.67 L486.4 292.18 L487.2 292.09 L488.0 292.33 L488.8 292.44 L489.6 292.65 L490.4 291.96 L491.2 292.16 L492.0 292.48 L492.8 292.30 L493.6 292.45 L494.4 292.44 L495.2 291.97 L496.0 291.94 L496.8 292.04 L497.6 292.14 L498.4 292.05 L499.2 292.13 L500.0 291.99 L500.8 291.92 L501.6 292.32 L502.4 292.51 L503.2 292.03 L504.0 291.98 L504.8 292.48 L505.6 291.96 L506.4 292.01 L507.2 292.29 L508.0 292.14 L508.8 292.53 L509.6 292.30 L510.4 292.32 L511.2 292.20 L512.0 291.92 L512.8 292.56 L513.6 292.21 L514.4 292.56 L515.2 291.98 L516.0 292.25 L516.8 292.33 L517.6 292.02 L518.4 291.96 L519.2 292.65 L520.0 292.65 L520.8 292.70 L521.6 292.34 L522.4 292.49 L523.2 292.38 L524.0 292.28 L524.8 292.04 L525.6 292.41 L526.4 292.25 L527.2 292.44 L528.0 291.93 L528.8 292.14 L529.6 291.99 L530.4 292.51 L531.2 292.28 L532.0 292.13 L532.8 292.53 L533.6 292.32 L534.4 292.13 L535.2 292.21 L536.0 291.90 L536.8 291.95 L537.6 291.93 L538.4 292.67 L539.2 292.60 L540.0 292.34 L540.8 292.65 L541.6 292.33 L542.4 292.45 L543.2 291.98 L544.0 292.25 L544.8 292.39 L545.6 292.23 L546.4 292.42 L547.2 292.17 L548.0 292.42 L548.8 292.07 L549.6 292.29 L550.4 292.24 L551.2 292.32 L552.0 291.94 L552.8 292.09 L553.6 292.47 L554.4 292.03 L555.2 292.28 L556.0 292.70 L556.8 292.39 L557.6 292.49 L558.4 292.52 L559.2 292.67 L560.0 292.21 L560.8 292.22 L561.6 292.50 L562.4 291.92 L563.2 292.27 L564.0 292.12 L564.8 292.35 L565.6 292.49 L566.4 292.59 L567.2 292.31 L568.0 292.45 L568.8 291.96 L569.6 292.43 L570.4 292.64 L571.2 292.39 L572.0 292.29 L572.8 292.31 L573.6 292.23 L574.4 292.04 L575.2 292.06 L576.0 292.54 L576.8 292.31 L577.6 291.93 L578.4 292.39 L579.2 292.56 L580.0 292.42 L580.8 292.04 L581.6 292.66 L582.4 292.05 L583.2 292.31 L584.0 292.27 L584.8 292.03 L585.6 292.11 L586.4 292.05 L587.2 292.03 L588.0 291.93 L588.8 292.42 L589.6 292.43 L590.4 292.10 L591.2 292.66 L592.0 292.24 L592.8 292.27 L593.6 292.64 L594.4 292.42 L595.2 292.27 L596.0 292.50 L596.8 292.49 L597.6 292.15 L598.4 291.96 L599.2 292.49 L600.0 292.50 L600.8 292.38 L601.6 291.99 L602.4 292.50 L603.2 292.04 L604.0 292.54 L604.8 292.40 L605.6 292.41 L606.4 291.96 L607.2 292.19 L608.0 292.49 L608.8 291.99 L609.6 291.93 L610.4 292.23 L611.2 292.58 L612.0 292.40 L612.8 292.08 L613.6 291.97 L614.4 292.57 L615.2 292.57 L616.0 292.46 L616.8 292.07 L617.6 292.50 L618.4 291.91 L619.2 292.04 L620.0 292.16 L620.8 292.67 L621.6 291.93 L622.4 292.03 L623.2 292.49 L624.0 292.51 L624.8 292.11 L625.6 291.96 L626.4 292.58 L627.2 292.68 L628.0 292.63 L628.8 292.35 L629.6 291.97 L630.4 292.49 L631.2 292.42 L632.0 292.57 L632.8 292.51 L633.6 292.30 L634.4 292.68 L635.2 292.27 L636.0 292.26 L636.8 292.41 L637.6 292.53 L638.4 292.37 L639.2 292.65 L640.0 292.12 L640.8 292.62 L641.6 292.60 L642.4 292.18 L643.2 291.92 L644.0 292.38 L644.8 292.40 L645.6 292.67 L646.4 292.35 L647.2 292.48 L648.0 292.51 L648.8 292.03 L649.6 292.43 L650.4 292.25 L651.2 292.07 L652.0 292.12 L652.8 292.19 L653.6 292.49 L654.4 292.34 L655.2 292.16 L656.0 291.94 L656.8 292.53 L657.6 292.50 L658.4 292.57 L659.2 292.53 L660.0 291.95 L660.8 292.12 L661.6 292.27 L662.4 292.14 L663.2 292.56 L664.0 292.06 L664.8 291.91 L665.6 292.26 L666.4 291.94 L667.2 291.92 L668.0 292.38 L668.8 292.38 L669.6 292.33 L670.4 291.96 L671.2 292.35 L672.0 292.32 L672.8 292.14 L673.6 292.08 L674.4 292.02 L675.2 292.29 L676.0 292.19 L676.8 292.37 L677.6 292.44 L678.4 292.12 L679.2 292.39 L680.0 292.11 L680.8 292.50 L681.6 292.06 L682.4 292.38 L683.2 292.49 L684.0 292.54 L684.8 292.32 L685.6 292.63 L686.4 292.69 L687.2 292.53 L688.0 292.19 L688.8 292.11 L689.6 292.40 L690.4 292.00 L691.2 292.04 L692.0 291.98 L692.8 292.42 L693.6 292.21 L694.4 292.64 L695.2 292.55 L696.0 292.33 L696.8 292.17 L697.6 292.16 L698.4 291.94 L699.2 291.99 L700.0 292.60 L700.8 292.14 L701.6 291.91 L702.4 292.68 L703.2 292.20 L704.0 292.52 L704.8 292.26 L705.6 292.67 L706.4 291.96 L707.2 292.28 L708.0 292.42 L708.8 291.92 L709.6 292.63 L710.4 292.17 L711.2 292.44 L712.0 291.96 L712.8 291.96 L713.6 291.97 L714.4 292.53 L715.2 292.65 L716.0 292.63 L716.8 292.32 L717.6 291.97 L718.4 292.52 L719.2 290.80 L720.0 289.30 L720.8 290.80 L721.6 292.30 L722.4 292.04 L723.2 292.01 L724.0 291.97 L724.8 292.25 L725.6 292.13 L726.4 292.66 L727.2 291.94 L728.0 292.51 L728.8 292.00 L729.6 291.98 L730.4 292.64 L731.2 292.08 L732.0 292.38 L732.8 292.37 L733.6 292.22 L734.4 292.18 L735.2 292.01 L736.0 292.46 L736.8 292.20 L737.6 292.38 L738.4 292.56 L739.2 291.96 L740.0 292.24 L740.8 292.18 L741.6 292.65 L742.4 292.40 L743.2 292.06 L744.0 292.27 L744.8 291.91 L745.6 292.31 L746.4 291.96 L747.2 292.01 L748.0 292.31 L748.8 292.33 L749.6 292.07 L750.4 292.37 L751.2 292.15 L752.0 292.46 L752.8 291.94 L753.6 292.57 L754.4 292.26 L755.2 292.04 L756.0 292.13 L756.8 292.40 L757.6 291.98 L758.4 292.63 L759.2 292.08 L760.0 292.23 L760.8 291.96 L761.6 292.26 L762.4 292.67 L763.2 292.05 L764.0 292.04 L764.8 292.34 L765.6 292.41 L766.4 292.01 L767.2 292.08 L768.0 292.38 L768.8 292.09 L769.6 291.92 L770.4 292.46 L771.2 292.59 L772.0 292.54 L772.8 292.58 L773.6 292.07 L774.4 292.15 L775.2 292.38 L776.0 292.39 L776.8 292.40 L777.6 292.34 L778.4 292.09 L779.2 292.09 L780.0 291.97 L780.8 291.95 L781.6 292.36 L782.4 291.97 L783.2 292.60 L784.0 292.67 L784.8 292.02 L785.6 292.67 L786.4 292.40 L787.2 291.90 L788.0 292.21 L788.8 292.19 L789.6 292.15 L790.4 291.95 L791.2 292.09 L792.0 291.91 L792.8 292.26 L793.6 292.29 L794.4 292.09 L795.2 292.64 L796.0 292.61 L796.8 292.30 L797.6 292.54 L798.4 292.18 L799.2 292.50 L800.0 292.52 L800.8 292.18 L801.6 292.49 L802.4 292.18 L803.2 292.04 L804.0 292.24 L804.8 291.99 L805.6 292.47 L806.4 292.10 L807.2 292.30 L808.0 292.55 L808.8 292.38 L809.6 292.63 L810.4 292.48 L811.2 292.45 L812.0 292.49 L812.8 292.45 L813.6 292.63 L814.4 292.38 L815.2 292.43 L816.0 292.34 L816.8 292.33 L817.6 292.65 L818.4 292.14 L819.2 292.05 L820.0 292.30 L820.8 292.15 L821.6 292.47 L822.4 292.41 L823.2 291.90 L824.0 292.07 L824.8 292.40 L825.6 292.22 L826.4 292.44 L827.2 292.28 L828.0 291.99 L828.8 292.45 L829.6 292.68 L830.4 291.97 L831.2 292.39 L832.0 292.39 L832.8 292.39 L833.6 292.30 L834.4 292.31 L835.2 292.69 L836.0 292.60 L836.8 292.25 L837.6 292.55 L838.4 292.43 L839.2 292.54 L840.0 292.70 L840.8 291.96 L841.6 292.07 L842.4 292.09 L843.2 292.55 L844.0 292.64 L844.8 291.55 L845.6 290.05 L846.4 290.05 L847.2 291.55 L848.0 292.37 L848.8 292.61 L849.6 292.64 L850.4 291.97 L851.2 292.67 L852.0 292.13 L852.8 292.39 L853.6 292.50 L854.4 292.14 L855.2 292.15 L856.0 292.62 L856.8 292.53 L857.6 292.68 L858.4 291.98 L859.2 292.40 L860.0 292.49 L860.8 292.67 L861.6 292.48 L862.4 292.12 L863.2 291.98 L864.0 292.04 L864.8 292.11 L865.6 292.36 L866.4 292.16 L867.2 292.02 L868.0 291.97 L868.8 292.45 L869.6 292.55 L870.4 292.00 L871.2 292.31 L872.0 292.68 L872.8 292.19 L873.6 292.33 L874.4 292.55 L875.2 291.92 L876.0 292.60 L876.8 292.52 L877.6 292.49 L878.4 292.17 L879.2 292.29 L880.0 292.65 L880.8 291.95 L881.6 291.97 L882.4 292.41 L883.2 292.66 L884.0 292.02 L884.8 292.05 L885.6 292.27 L886.4 292.53 L887.2 292.35 L888.0 292.43 L888.8 291.94 L889.6 292.06 L890.4 292.37 L891.2 292.48 L892.0 291.97 L892.8 291.97 L893.6 292.15 L894.4 292.23 L895.2 292.17 L896.0 292.04 L896.8 291.96 L897.6 292.42 L898.4 292.66 L899.2 292.41 L900.0 292.64 L900.8 292.00 L901.6 292.39 L902.4 292.19 L903.2 292.58 L904.0 292.38 L904.8 292.39 L905.6 292.63 L906.4 292.66 L907.2 292.01 L908.0 292.25 L908.8 291.97 L909.6 292.35 L910.4 292.08 L911.2 292.46 L912.0 292.18 L912.8 291.91 L913.6 292.61 L914.4 292.00 L915.2 292.11 L916.0 292.32 L916.8 291.95 L917.6 292.52 L918.4 292.47 L919.2 291.99 L920.0 292.40 L920.8 292.00 L921.6 292.32 L922.4 291.97 L923.2 292.13 L924.0 292.26 L924.8 292.34 L925.6 292.42 L926.4 292.64 L927.2 292.17 L928.0 292.18 L928.8 292.07 L929.6 292.49 L930.4 292.19 L931.2 292.07 L932.0 292.05" fill="none" stroke="#8cec2c" stroke-width="1.9"/>
</svg>
<svg style="position:absolute;left:0;top:0" width="1000" height="563" viewBox="0 0 1000 563">
<path d="M53.8 284.5 L53.8 295.5 L68 290 Z" fill="#7a7a7a" stroke="#333" stroke-width="0.8"/>
<path d="M83.2 284.5 L83.2 295.5 L68.5 290 Z" fill="#7a7a7a" stroke="#333" stroke-width="0.8"/>
<line x1="64" y1="290" x2="73" y2="290" stroke="#000" stroke-width="1.2"/>
<path d="M918 285 L918 295.5 L932 290.3 Z" fill="#7a7a7a" stroke="#333" stroke-width="0.8"/>
<path d="M946.4 285 L946.4 295.5 L932.5 290.3 Z" fill="#7a7a7a" stroke="#333" stroke-width="0.8"/>
<line x1="928" y1="290.3" x2="937" y2="290.3" stroke="#000" stroke-width="1.2"/>
<path d="M100.8 440 L115.6 440 L108.2 451.2 Z" fill="#000"/>
</svg>
<svg style="position:absolute;left:38.40px;top:280.79px;overflow:visible;" width="27.40" height="19.48"><text x="2" y="14.61" font-family="Liberation Sans" font-weight="normal" font-size="13.91" fill="#0a0aff" stroke="#0a0aff" stroke-width="0.2" textLength="23.40" lengthAdjust="spacingAndGlyphs" xml:space="preserve">0,0</text></svg>
<svg style="position:absolute;left:69.60px;top:280.79px;overflow:visible;" width="28.00" height="19.48"><text x="2" y="14.61" font-family="Liberation Sans" font-weight="normal" font-size="13.91" fill="#ff1010" stroke="#ff1010" stroke-width="0.2" textLength="24.00" lengthAdjust="spacingAndGlyphs" xml:space="preserve">0,0</text></svg>
<svg style="position:absolute;left:69.50px;top:441.00px;overflow:visible;" width="44.60" height="18.67"><text x="2" y="14.00" font-family="Liberation Sans" font-weight="normal" font-size="13.33" fill="#ff1010" stroke="#ff1010" stroke-width="0.12" textLength="40.60" lengthAdjust="spacingAndGlyphs" xml:space="preserve">-25,0</text></svg>
<svg style="position:absolute;left:917.60px;top:280.79px;overflow:visible;" width="12.60" height="19.48"><text x="2" y="14.61" font-family="Liberation Sans" font-weight="normal" font-size="13.91" fill="#000" stroke="#000" stroke-width="0.2" textLength="8.60" lengthAdjust="spacingAndGlyphs" xml:space="preserve">0</text></svg>
<div style="position:absolute;left:4px;top:476.3px;width:992px;height:56.69999999999999px;box-sizing:border-box;background:#d8dee0"></div>
<div style="position:absolute;left:0px;top:530.5px;width:1000px;height:3.0px;box-sizing:border-box;background:linear-gradient(180deg,#d8dee3,#c4ccd4)"></div>
<div style="position:absolute;left:3.7px;top:487.3px;width:49.699999999999996px;height:40.7px;background:linear-gradient(180deg,#d6e6f4 0px,#e2ecf7 7px,#cfe2f3 12px,#a6cdee 19px,#8fc2ea 22px,#a9d1ef 27px,#bcdcf4 34px,#c6e1f6 41px);box-shadow:1px 1px 0 #a8b0b8"></div>
<svg style="position:absolute;left:7.50px;top:490.74px;overflow:visible;" width="19.40" height="10.35"><text x="2" y="7.76" font-family="Liberation Sans" font-weight="normal" font-size="7.39" fill="#3c4450" stroke="#3c4450" stroke-width="0.2" textLength="15.40" lengthAdjust="spacingAndGlyphs" xml:space="preserve">ESC</text></svg>
<div style="position:absolute;left:69.5px;top:487.3px;width:76.69999999999999px;height:40.7px;background:linear-gradient(180deg,#d6e6f4 0px,#e2ecf7 7px,#cfe2f3 12px,#a6cdee 19px,#8fc2ea 22px,#a9d1ef 27px,#bcdcf4 34px,#c6e1f6 41px);box-shadow:1px 1px 0 #a8b0b8"></div>
<svg style="position:absolute;left:73.30px;top:490.74px;overflow:visible;" width="11.30" height="10.35"><text x="2" y="7.76" font-family="Liberation Sans" font-weight="normal" font-size="7.39" fill="#3c4450" stroke="#3c4450" stroke-width="0.2" textLength="7.30" lengthAdjust="spacingAndGlyphs" xml:space="preserve">F1</text></svg>
<div style="position:absolute;left:147.4px;top:487.3px;width:78.0px;height:40.7px;background:linear-gradient(180deg,#d6e6f4 0px,#e2ecf7 7px,#cfe2f3 12px,#a6cdee 19px,#8fc2ea 22px,#a9d1ef 27px,#bcdcf4 34px,#c6e1f6 41px);box-shadow:1px 1px 0 #a8b0b8"></div>
<svg style="position:absolute;left:151.20px;top:490.74px;overflow:visible;" width="11.30" height="10.35"><text x="2" y="7.76" font-family="Liberation Sans" font-weight="normal" font-size="7.39" fill="#3c4450" stroke="#3c4450" stroke-width="0.2" textLength="7.30" lengthAdjust="spacingAndGlyphs" xml:space="preserve">F2</text></svg>
<div style="position:absolute;left:225.8px;top:487.3px;width:77.39999999999998px;height:40.7px;background:linear-gradient(180deg,#d6e6f4 0px,#e2ecf7 7px,#cfe2f3 12px,#a6cdee 19px,#8fc2ea 22px,#a9d1ef 27px,#bcdcf4 34px,#c6e1f6 41px);box-shadow:1px 1px 0 #a8b0b8"></div>
<svg style="position:absolute;left:229.60px;top:490.74px;overflow:visible;" width="11.30" height="10.35"><text x="2" y="7.76" font-family="Liberation Sans" font-weight="normal" font-size="7.39" fill="#3c4450" stroke="#3c4450" stroke-width="0.2" textLength="7.30" lengthAdjust="spacingAndGlyphs" xml:space="preserve">F3</text></svg>
<div style="position:absolute;left:304.2px;top:487.3px;width:76.40000000000003px;height:40.7px;background:linear-gradient(180deg,#d6e6f4 0px,#e2ecf7 7px,#cfe2f3 12px,#a6cdee 19px,#8fc2ea 22px,#a9d1ef 27px,#bcdcf4 34px,#c6e1f6 41px);box-shadow:1px 1px 0 #a8b0b8"></div>
<svg style="position:absolute;left:308.00px;top:490.74px;overflow:visible;" width="11.30" height="10.35"><text x="2" y="7.76" font-family="Liberation Sans" font-weight="normal" font-size="7.39" fill="#3c4450" stroke="#3c4450" stroke-width="0.2" textLength="7.30" lengthAdjust="spacingAndGlyphs" xml:space="preserve">F4</text></svg>
<div style="position:absolute;left:395px;top:487.3px;width:76.39999999999998px;height:40.7px;background:linear-gradient(180deg,#dcdcdc 0px,#e2e2e2 7px,#d4d4d4 14px,#c4c4c4 21px,#cdcdcd 28px,#d8d8d8 41px);box-shadow:1px 1px 0 #a8b0b8"></div>
<svg style="position:absolute;left:398.80px;top:490.74px;overflow:visible;" width="11.30" height="10.35"><text x="2" y="7.76" font-family="Liberation Sans" font-weight="normal" font-size="7.39" fill="#f2f2f2" stroke="#f2f2f2" stroke-width="0.2" textLength="7.30" lengthAdjust="spacingAndGlyphs" xml:space="preserve">F5</text></svg>
<div style="position:absolute;left:472.4px;top:487.3px;width:77.60000000000002px;height:40.7px;background:linear-gradient(180deg,#d6e6f4 0px,#e2ecf7 7px,#cfe2f3 12px,#a6cdee 19px,#8fc2ea 22px,#a9d1ef 27px,#bcdcf4 34px,#c6e1f6 41px);box-shadow:1px 1px 0 #a8b0b8"></div>
<svg style="position:absolute;left:476.20px;top:490.74px;overflow:visible;" width="11.30" height="10.35"><text x="2" y="7.76" font-family="Liberation Sans" font-weight="normal" font-size="7.39" fill="#3c4450" stroke="#3c4450" stroke-width="0.2" textLength="7.30" lengthAdjust="spacingAndGlyphs" xml:space="preserve">F6</text></svg>
<div style="position:absolute;left:551px;top:487.3px;width:76.60000000000002px;height:40.7px;background:linear-gradient(180deg,#d6e6f4 0px,#e2ecf7 7px,#cfe2f3 12px,#a6cdee 19px,#8fc2ea 22px,#a9d1ef 27px,#bcdcf4 34px,#c6e1f6 41px);box-shadow:1px 1px 0 #a8b0b8"></div>
<svg style="position:absolute;left:554.80px;top:490.74px;overflow:visible;" width="11.30" height="10.35"><text x="2" y="7.76" font-family="Liberation Sans" font-weight="normal" font-size="7.39" fill="#3c4450" stroke="#3c4450" stroke-width="0.2" textLength="7.30" lengthAdjust="spacingAndGlyphs" xml:space="preserve">F7</text></svg>
<div style="position:absolute;left:628.4px;top:487.3px;width:77.60000000000002px;height:40.7px;background:linear-gradient(180deg,#d6e6f4 0px,#e2ecf7 7px,#cfe2f3 12px,#a6cdee 19px,#8fc2ea 22px,#a9d1ef 27px,#bcdcf4 34px,#c6e1f6 41px);box-shadow:1px 1px 0 #a8b0b8"></div>
<svg style="position:absolute;left:632.20px;top:490.74px;overflow:visible;" width="11.30" height="10.35"><text x="2" y="7.76" font-family="Liberation Sans" font-weight="normal" font-size="7.39" fill="#3c4450" stroke="#3c4450" stroke-width="0.2" textLength="7.30" lengthAdjust="spacingAndGlyphs" xml:space="preserve">F8</text></svg>
<div style="position:absolute;left:721.6px;top:487.3px;width:76.79999999999995px;height:40.7px;background:linear-gradient(180deg,#d6e6f4 0px,#e2ecf7 7px,#cfe2f3 12px,#a6cdee 19px,#8fc2ea 22px,#a9d1ef 27px,#bcdcf4 34px,#c6e1f6 41px);box-shadow:1px 1px 0 #a8b0b8"></div>
<svg style="position:absolute;left:725.40px;top:490.74px;overflow:visible;" width="11.30" height="10.35"><text x="2" y="7.76" font-family="Liberation Sans" font-weight="normal" font-size="7.39" fill="#3c4450" stroke="#3c4450" stroke-width="0.2" textLength="7.30" lengthAdjust="spacingAndGlyphs" xml:space="preserve">F9</text></svg>
<div style="position:absolute;left:800px;top:487.3px;width:76.79999999999995px;height:40.7px;background:linear-gradient(180deg,#d6e6f4 0px,#e2ecf7 7px,#cfe2f3 12px,#a6cdee 19px,#8fc2ea 22px,#a9d1ef 27px,#bcdcf4 34px,#c6e1f6 41px);box-shadow:1px 1px 0 #a8b0b8"></div>
<svg style="position:absolute;left:803.80px;top:490.74px;overflow:visible;" width="16.30" height="10.35"><text x="2" y="7.76" font-family="Liberation Sans" font-weight="normal" font-size="7.39" fill="#3c4450" stroke="#3c4450" stroke-width="0.2" textLength="12.30" lengthAdjust="spacingAndGlyphs" xml:space="preserve">F10</text></svg>
<div style="position:absolute;left:890.2px;top:487.3px;width:50.09999999999991px;height:40.7px;background:linear-gradient(180deg,#d6e6f4 0px,#e2ecf7 7px,#cfe2f3 12px,#a6cdee 19px,#8fc2ea 22px,#a9d1ef 27px,#bcdcf4 34px,#c6e1f6 41px);box-shadow:1px 1px 0 #a8b0b8"></div>
<svg style="position:absolute;left:894.00px;top:490.74px;overflow:visible;" width="15.80" height="10.35"><text x="2" y="7.76" font-family="Liberation Sans" font-weight="normal" font-size="7.39" fill="#3c4450" stroke="#3c4450" stroke-width="0.2" textLength="11.80" lengthAdjust="spacingAndGlyphs" xml:space="preserve">F11</text></svg>
<div style="position:absolute;left:941.2px;top:487.3px;width:49.19999999999993px;height:40.7px;background:linear-gradient(180deg,#d6e6f4 0px,#e2ecf7 7px,#cfe2f3 12px,#a6cdee 19px,#8fc2ea 22px,#a9d1ef 27px,#bcdcf4 34px,#c6e1f6 41px);box-shadow:1px 1px 0 #a8b0b8"></div>
<svg style="position:absolute;left:945.00px;top:490.74px;overflow:visible;" width="16.00" height="10.35"><text x="2" y="7.76" font-family="Liberation Sans" font-weight="normal" font-size="7.39" fill="#3c4450" stroke="#3c4450" stroke-width="0.2" textLength="12.00" lengthAdjust="spacingAndGlyphs" xml:space="preserve">F12</text></svg>
<svg style="position:absolute;left:16.00px;top:475.01px;overflow:visible;" width="26.40" height="13.19"><text x="2" y="9.89" font-family="Liberation Sans" font-weight="normal" font-size="9.42" fill="#303444" stroke="#303444" stroke-width="0.2" textLength="22.40" lengthAdjust="spacingAndGlyphs" xml:space="preserve">Interr.</text></svg>
<svg style="position:absolute;left:94.75px;top:475.01px;overflow:visible;" width="27.50" height="13.19"><text x="2" y="9.89" font-family="Liberation Sans" font-weight="normal" font-size="9.42" fill="#303444" stroke="#303444" stroke-width="0.2" textLength="23.50" lengthAdjust="spacingAndGlyphs" xml:space="preserve">Guida</text></svg>
<svg style="position:absolute;left:172.75px;top:475.01px;overflow:visible;" width="26.50" height="13.19"><text x="2" y="9.89" font-family="Liberation Sans" font-weight="normal" font-size="9.42" fill="#303444" stroke="#303444" stroke-width="0.2" textLength="22.50" lengthAdjust="spacingAndGlyphs" xml:space="preserve">Zoom</text></svg>
<svg style="position:absolute;left:250.65px;top:475.01px;overflow:visible;" width="28.30" height="13.19"><text x="2" y="9.89" font-family="Liberation Sans" font-weight="normal" font-size="9.42" fill="#303444" stroke="#303444" stroke-width="0.2" textLength="24.30" lengthAdjust="spacingAndGlyphs" xml:space="preserve">Misura</text></svg>
<svg style="position:absolute;left:326.40px;top:475.01px;overflow:visible;" width="32.60" height="13.19"><text x="2" y="9.89" font-family="Liberation Sans" font-weight="normal" font-size="9.42" fill="#303444" stroke="#303444" stroke-width="0.2" textLength="28.60" lengthAdjust="spacingAndGlyphs" xml:space="preserve">Cursore</text></svg>
<svg style="position:absolute;left:493.00px;top:475.01px;overflow:visible;" width="36.00" height="13.19"><text x="2" y="9.89" font-family="Liberation Sans" font-weight="normal" font-size="9.42" fill="#303444" stroke="#303444" stroke-width="0.2" textLength="32.00" lengthAdjust="spacingAndGlyphs" xml:space="preserve">Inferiore</text></svg>
<svg style="position:absolute;left:574.00px;top:475.01px;overflow:visible;" width="30.00" height="13.19"><text x="2" y="9.89" font-family="Liberation Sans" font-weight="normal" font-size="9.42" fill="#303444" stroke="#303444" stroke-width="0.2" textLength="26.00" lengthAdjust="spacingAndGlyphs" xml:space="preserve">Ricerca</text></svg>
<svg style="position:absolute;left:648.90px;top:475.01px;overflow:visible;" width="37.00" height="13.19"><text x="2" y="9.89" font-family="Liberation Sans" font-weight="normal" font-size="9.42" fill="#303444" stroke="#303444" stroke-width="0.2" textLength="33.00" lengthAdjust="spacingAndGlyphs" xml:space="preserve">Risultato</text></svg>
<svg style="position:absolute;left:750.00px;top:475.01px;overflow:visible;" width="22.00" height="13.19"><text x="2" y="9.89" font-family="Liberation Sans" font-weight="normal" font-size="9.42" fill="#303444" stroke="#303444" stroke-width="0.2" textLength="18.00" lengthAdjust="spacingAndGlyphs" xml:space="preserve">Nota</text></svg>
<svg style="position:absolute;left:827.75px;top:475.01px;overflow:visible;" width="20.50" height="13.19"><text x="2" y="9.89" font-family="Liberation Sans" font-weight="normal" font-size="9.42" fill="#303444" stroke="#303444" stroke-width="0.2" textLength="16.50" lengthAdjust="spacingAndGlyphs" xml:space="preserve">DSA</text></svg>
<svg style="position:absolute;left:898.60px;top:475.01px;overflow:visible;" width="34.00" height="13.19"><text x="2" y="9.89" font-family="Liberation Sans" font-weight="normal" font-size="9.42" fill="#303444" stroke="#303444" stroke-width="0.2" textLength="30.00" lengthAdjust="spacingAndGlyphs" xml:space="preserve">Indietro</text></svg>
<svg style="position:absolute;left:947.50px;top:475.01px;overflow:visible;" width="37.00" height="13.19"><text x="2" y="9.89" font-family="Liberation Sans" font-weight="normal" font-size="9.42" fill="#303444" stroke="#303444" stroke-width="0.2" textLength="33.00" lengthAdjust="spacingAndGlyphs" xml:space="preserve">Continua</text></svg>
<svg style="position:absolute;left:0;top:0" width="1000" height="563" viewBox="0 0 1000 563">
<!-- ESC chevrons -->
<path d="M15.8 507.2 L29.1 499.9 L42.4 507.2 M15.8 516.2 L29.1 508.9 L42.4 516.2" fill="none" stroke="#1a1616" stroke-width="3.6" stroke-linejoin="miter"/>
<!-- F1 ? -->
<path d="M96.8 502.5 C96.8 494.5 101.5 491.8 106.5 491.8 C112.5 491.8 116.3 495.5 116.3 500.5 C116.3 506 110.5 507.5 110 511 L110 513.5 L102.5 513.5 L102.5 510 C102.5 505 108.6 504 108.6 500.2 C108.6 498.3 107.6 497.3 106.4 497.3 C105 497.3 104 498.3 104 502.5 Z" fill="#e6e000" stroke="#4a4a30" stroke-width="0.9"/>
<rect x="102.3" y="515.8" width="7.8" height="6.4" fill="#e6e000" stroke="#4a4a30" stroke-width="0.9"/>
<!-- F2 magnifier -->
<circle cx="178.2" cy="502" r="8.3" fill="none" stroke="#141414" stroke-width="1.8"/>
<path d="M183 499.5 C183.3 503.5 181.5 506.5 178.3 507.8" fill="none" stroke="#141414" stroke-width="2"/>
<path d="M184.2 508.3 L187.3 505.6 L202.3 520.6 L196.8 521.8 Z" fill="#141414"/>
<!-- F3 play -->
<path d="M254.7 494.4 L278.2 508.2 L254.7 522 Z" fill="#218a37"/>
<!-- F4 cursor -->
<path d="M328.9 500.6 H366.7 M328.9 508.9 H366.7" stroke="#c4b6ac" stroke-width="1.9"/>
<path d="M320.9 499 V512.5" stroke="#2e6eb4" stroke-width="2.8"/>
<path d="M317.3 500.8 L320.9 495.6 L324.5 500.8 Z M317.3 510.5 L320.9 515.7 L324.5 510.5 Z" fill="#2e6eb4"/>
<path d="M335.5 512.6 L337.5 488.1 L340 512.6 L342.4 501.2 L344.4 518.3 L346.5 504.4 L348.5 511 L350.6 503.6 L352.6 487.7 L354.2 513.4 L357.1 501.2 L359.1 518.7 L361.6 504.8 L364.5 510.1" fill="none" stroke="#111" stroke-width="1.9" stroke-linejoin="miter" stroke-miterlimit="6"/>
<path d="M339 523.6 H357" stroke="#2e6eb4" stroke-width="2.8"/>
<path d="M340.5 519.8 L335.3 523.6 L340.5 527.4 Z M355.5 519.8 L360.7 523.6 L355.5 527.4 Z" fill="#2e6eb4"/>
<!-- F6 -->
<path d="M499.1 492 L522.8 492 L510.9 504.8 Z" fill="#2e6cb6"/>
<rect x="487.6" y="507.2" width="46.7" height="18.1" fill="#fff"/>
<path d="M487.6 508 H534.3 M487.6 524.6 H534.3" stroke="#b4b4b4" stroke-width="1.6"/>
<path d="M487.6 521.4 H494.2 V514.6 H509.2 V521.4 H522 V514.6 H534.3" fill="none" stroke="#111" stroke-width="2"/>
<!-- F7 binoculars -->
<path d="M575 495 C575 491.5 583.5 491.5 583.5 495 L583.5 500.5 L594.5 500.5 L594.5 495 C594.5 491.5 603.5 491.5 603.5 495 L604 505 C606.5 509 607 515 606.5 520 C605.5 525 594 525 593 520 L592.5 510 L585.5 510 L585 520 C584 525 572.5 525 572 520 C571.5 515 572 509 574.5 505 Z" fill="#1a1616"/>
<ellipse cx="578.6" cy="520.3" rx="5.2" ry="2.3" fill="#fff"/>
<ellipse cx="599.4" cy="520.3" rx="5.2" ry="2.3" fill="#fff"/>
<!-- F8 -->
<path d="M647.7 492.7 H657.5 L664.5 499.7 V515.2 H647.7 Z" fill="#fff" stroke="#141414" stroke-width="1.5"/>
<path d="M657.5 492.7 V499.7 H664.5 Z" fill="#141414"/>
<path d="M656 501 L668.8 512.5 M668.8 501 L656 512.5" stroke="#e23232" stroke-width="2.6"/>
<path d="M657.5 521 L661 525.8 L669.5 515.5" fill="none" stroke="#1a8a32" stroke-width="2.4"/>
<path d="M675.5 500 L678 493 L690.5 492.5 L688 500 Z" fill="#161616"/>
<rect x="677.5" y="494.5" width="8.5" height="3.5" fill="#e8e8e8"/>
<rect x="673" y="500" width="18" height="5" fill="#fff" stroke="#6a7a88" stroke-width="0.8"/>
<rect x="674" y="503" width="15.5" height="5.5" fill="#161616"/>
<rect x="673.8" y="512.2" width="15" height="9.8" fill="#161616"/>
<path d="M675 518 H688" stroke="#e8e8e8" stroke-width="1"/>
<rect x="685.5" y="513.5" width="1.8" height="1.2" fill="#8ab"/>
<!-- F9 document -->
<path d="M748.5 491.3 H766 L773.2 498.5 V524.7 H748.5 Z" fill="#fff" stroke="#141414" stroke-width="2.6"/>
<path d="M766 491.3 V498.5 H773.2 Z" fill="#141414"/>
<path d="M753.3 504 H767.7 M753.3 508.8 H763.5 M753.3 513.3 H767.7 M753.3 517.8 H767.7" stroke="#141414" stroke-width="2"/>
<!-- F10 DSA -->
<rect x="816.5" y="498" width="13.4" height="6.5" fill="none" stroke="#141414" stroke-width="1.6"/>
<path d="M836 500.6 H840.3 V516.3 H845" fill="none" stroke="#2a6ec0" stroke-width="1.6"/>
<path d="M832.5 500.6 L836.5 497.5 L836.5 503.7 Z" fill="#2a6ec0"/>
<rect x="845.8" y="501.3" width="13.8" height="6.5" fill="none" stroke="#8c8c8c" stroke-width="1.6"/>
<rect x="845.8" y="513" width="13.8" height="6.5" fill="none" stroke="#8c8c8c" stroke-width="1.6"/>
<!-- F11 F12 -->
<path d="M916 500.5 L901.5 508.6 L916 516.5 M929.8 500.5 L915.3 508.6 L929.8 516.5" fill="none" stroke="#1a1616" stroke-width="3.5"/>
<path d="M952 500.5 L966.5 508.6 L952 516.5 M965.8 500.5 L980.3 508.6 L965.8 516.5" fill="none" stroke="#1a1616" stroke-width="3.5"/>
</svg>
<div style="position:absolute;left:0;top:533.5px;width:1000px;height:30px;overflow:hidden;background:linear-gradient(90deg,#2a78b8 0,#3a8ccb 80px,#3a90cf 300px,#2c7fc6 500px,#2272bc 700px,#1e62a8 850px,#183f78 1000px)">
<div style="position:absolute;left:0;top:0;width:1000px;height:1px;background:rgba(255,255,255,.35)"></div>
<div style="position:absolute;left:-60px;top:-40px;width:600px;height:80px;border-radius:50%;border-bottom:6px solid rgba(190,225,250,.22);filter:blur(2px);transform:rotate(-3deg)"></div>
<svg style="position:absolute;left:0;top:0;filter:blur(1.2px)" width="1000" height="30"><path d="M648 -2 Q690 8 724 32" fill="none" stroke="rgba(215,238,255,.78)" stroke-width="4.5"/></svg>
<div style="position:absolute;left:0;top:0;width:1000px;height:30px;background:linear-gradient(180deg,rgba(255,255,255,.12),rgba(255,255,255,0) 40%,rgba(0,0,30,.05))"></div>
</div>
<svg style="position:absolute;left:0;top:533px" width="1000" height="30" viewBox="0 0 1000 30">
<defs>
<radialGradient id="orb" cx="0.5" cy="0.35" r="0.65"><stop offset="0" stop-color="#7fc8f0"/><stop offset="0.6" stop-color="#2a78b8"/><stop offset="1" stop-color="#143e70"/></radialGradient>
<linearGradient id="tbtn" x1="0" y1="0" x2="0" y2="1"><stop offset="0" stop-color="rgba(255,255,255,.45)"/><stop offset="0.5" stop-color="rgba(255,255,255,.22)"/><stop offset="1" stop-color="rgba(255,255,255,.12)"/></linearGradient>
</defs>
<defs><linearGradient id="orb2" x1="0" y1="0" x2="0" y2="1"><stop offset="0" stop-color="#b4c4d4"/><stop offset="0.45" stop-color="#6c8aa8"/><stop offset="0.55" stop-color="#1c4a7c"/><stop offset="0.85" stop-color="#1a6aa8"/><stop offset="1" stop-color="#30d0f8"/></linearGradient></defs>
<circle cx="19.5" cy="15.5" r="13" fill="url(#orb2)" stroke="rgba(200,220,240,.55)" stroke-width="1"/>
<path d="M12.5 9 Q16.5 6.5 21 8.5 L19.8 14.8 Q16 13 11.6 15 Z" fill="#f05a22"/>
<path d="M21.8 8.8 Q25.5 10.5 29 8.8 L27.8 15.2 Q24.2 16.6 20.6 15 Z" fill="#8cc43a"/>
<path d="M11.2 16 Q15.4 14 19.6 15.8 L18.5 22 Q14.6 20.2 10.2 22.2 Z" fill="#1aa0e8"/>
<path d="M20.4 16 Q24 17.6 27.6 16 L26.4 22.4 Q22.8 23.8 19.2 22.2 Z" fill="#ffc21a"/>
<!-- explorer folder -->
<path d="M54 7 H61 L63 9 H76.5 V25 H54 Z" fill="#f0d27a" stroke="#c8a040" stroke-width="0.8"/>
<rect x="56" y="8.5" width="19" height="6" fill="#fff"/>
<circle cx="57.5" cy="7.5" r="1" fill="#3c3"/><circle cx="63" cy="9" r="1" fill="#e33"/><circle cx="69" cy="10.5" r="1" fill="#39f"/>
<path d="M54 12.5 H76.5 V25 H54 Z" fill="#f6dc8c"/>
<path d="M58 17 H73 V25 H70 V20 H61 V25 H58 Z" fill="#bfe6f8"/>
<!-- chrome -->
<circle cx="110.4" cy="15" r="10.5" fill="#db4437"/>
<path d="M110.4 15 L101.3 9.75 A10.5 10.5 0 0 0 105.15 24.1 Z" fill="#0f9d58"/>
<path d="M110.4 15 L105.15 24.1 A10.5 10.5 0 0 0 120.9 15 L120.9 15 Z" fill="#ffcd40"/>
<path d="M110.4 15 L120.9 15 A10.5 10.5 0 0 0 119.5 9.75 L110.4 9.75 Z" fill="#ffcd40"/>
<circle cx="110.4" cy="15" r="4.8" fill="#fff"/>
<circle cx="110.4" cy="15" r="3.8" fill="#4285f4"/>
<!-- word -->
<rect x="150" y="5.5" width="16" height="19" fill="#fff" stroke="#2b579a" stroke-width="0.8"/>
<path d="M156 9 H164 M156 12 H164 M156 15 H164 M156 18 H164 M156 21 H164" stroke="#2b579a" stroke-width="1"/>
<path d="M144.5 6 L157 4 L157 26 L144.5 24 Z" fill="#2b579a"/>
<text x="150.8" y="19" text-anchor="middle" font-family="Liberation Sans" font-weight="bold" font-size="9" fill="#fff">W</text>
<!-- task buttons -->
<defs><linearGradient id="tb2" x1="0" y1="0" x2="0" y2="1"><stop offset="0" stop-color="rgba(255,255,255,.62)"/><stop offset="0.5" stop-color="rgba(255,255,255,.42)"/><stop offset="1" stop-color="rgba(255,255,255,.30)"/></linearGradient></defs>
<rect x="179.8" y="1.2" width="42.8" height="28.6" rx="2" fill="url(#tb2)" stroke="rgba(10,30,60,.55)" stroke-width="0.8"/>
<rect x="225.2" y="1.2" width="42.8" height="28.6" rx="2" fill="url(#tb2)" stroke="rgba(10,30,60,.55)" stroke-width="0.8"/>
<rect x="270.5" y="1.2" width="42.5" height="28.6" rx="2" fill="url(#tb2)" stroke="rgba(10,30,60,.55)" stroke-width="0.8"/>
<!-- thunderbird -->
<circle cx="201.5" cy="15.5" r="10" fill="#2a64c0"/>
<path d="M193 11 Q196 4 204 5 Q210 6 211 12 Q208 8 203 8.5 Q197 9 195 14 Z" fill="#6ab0f0"/>
<path d="M192.5 15 Q193 9 198 7.5 L197 11 Z" fill="#1a3a80"/>
<path d="M193.5 14.5 L206 13 L208 21 L196.5 23.5 Z" fill="#f0ece2" stroke="#8a8478" stroke-width="0.6"/>
<path d="M193.5 14.5 L201.5 19 L206 13" fill="none" stroke="#8a8478" stroke-width="0.6"/>
<path d="M206 13 Q211 15 209 21 L208 21 Z" fill="#3a7ad8"/>
<!-- DSA icon -->
<rect x="235.5" y="3.5" width="22.8" height="23" fill="#fff" stroke="#b8c4d0" stroke-width="0.5"/>
<rect x="237.5" y="7" width="7" height="3.6" rx="0.8" fill="#fff" stroke="#111" stroke-width="1.4"/>
<path d="M245 8.8 H248 V22 H250.5" fill="none" stroke="#3a72d8" stroke-width="1.2"/>
<path d="M244.8 8.8 L247 7.3 L247 10.3 Z" fill="#3a72d8"/>
<rect x="250.5" y="12.5" width="6" height="3.2" fill="#eee" stroke="#888" stroke-width="0.9"/>
<rect x="250.5" y="19.8" width="6" height="3.2" fill="#eee" stroke="#888" stroke-width="0.9"/>
<!-- FSA icon -->
<path d="M285.5 10 Q291.5 5 297.5 10" fill="none" stroke="#6a6a6a" stroke-width="1.2"/>
<path d="M283.8 19 L283.8 14 Q283.8 9.5 291.5 9.5 Q299.2 9.5 299.2 14 L299.2 19 Z" fill="#8cc43c" stroke="#6a6a6a" stroke-width="1.1"/>
<path d="M283.8 17.5 H299.2" stroke="#6a6a6a" stroke-width="1"/>
<path d="M287.6 13 V27 M291.5 13 V27 M295.4 13 V27" stroke="#1e1e1e" stroke-width="1.5"/>
</svg>
<svg style="position:absolute;left:823.00px;top:539.35px;overflow:visible;" width="11.00" height="14.20"><text x="2" y="10.65" font-family="Liberation Sans" font-weight="normal" font-size="10.14" fill="#e8f0f8" stroke="#e8f0f8" stroke-width="0.2" textLength="7.00" lengthAdjust="spacingAndGlyphs" xml:space="preserve">IT</text></svg>
<svg style="position:absolute;left:0;top:533px" width="1000" height="30" viewBox="0 0 1000 30">
<path d="M846 18.5 L848.5 15.5 L851 18.5 Z" fill="#e8f0f8"/>
<path d="M862 11 L866 9 L870 11 L870 15 L866 17 L862 15 Z" fill="#f0f0f0" stroke="#333" stroke-width="0.6"/>
<circle cx="869.5" cy="18.5" r="3" fill="#3cba3c"/>
<path d="M879 9 V23" stroke="#eee" stroke-width="1.3"/>
<path d="M880 9.5 H886 L885 13 H880 Z" fill="#fff"/>
<circle cx="887" cy="19" r="3.2" fill="#e23"/>
<path d="M885.5 17.5 L888.5 20.5 M888.5 17.5 L885.5 20.5" stroke="#fff" stroke-width="0.9"/>
<rect x="898.5" y="10" width="7.5" height="13" rx="1" fill="none" stroke="#eee" stroke-width="1.3"/>
<rect x="900.5" y="8.5" width="3.5" height="1.5" fill="#eee"/>
<path d="M916 13 H918.5 L922 10 V22 L918.5 19 H916 Z" fill="#f0f0f0"/>
<path d="M923.5 13.5 Q925 16 923.5 18.5" fill="none" stroke="#ddd" stroke-width="0.8"/>
<rect x="990.5" y="0.5" width="9" height="29" fill="rgba(255,255,255,.08)" stroke="rgba(200,220,240,.45)" stroke-width="1"/>
</svg>
<svg style="position:absolute;left:947.00px;top:537.07px;overflow:visible;" width="25.50" height="13.10"><text x="2" y="9.83" font-family="Liberation Sans" font-weight="normal" font-size="9.36" fill="#f2f6fa" stroke="#f2f6fa" stroke-width="0.2" textLength="21.50" lengthAdjust="spacingAndGlyphs" xml:space="preserve">14:43</text></svg>
<svg style="position:absolute;left:936.30px;top:548.94px;overflow:visible;" width="46.70" height="14.08"><text x="2" y="10.56" font-family="Liberation Sans" font-weight="normal" font-size="10.06" fill="#f2f6fa" stroke="#f2f6fa" stroke-width="0.2" textLength="42.70" lengthAdjust="spacingAndGlyphs" xml:space="preserve">28/10/2016</text></svg>
</body></html>
